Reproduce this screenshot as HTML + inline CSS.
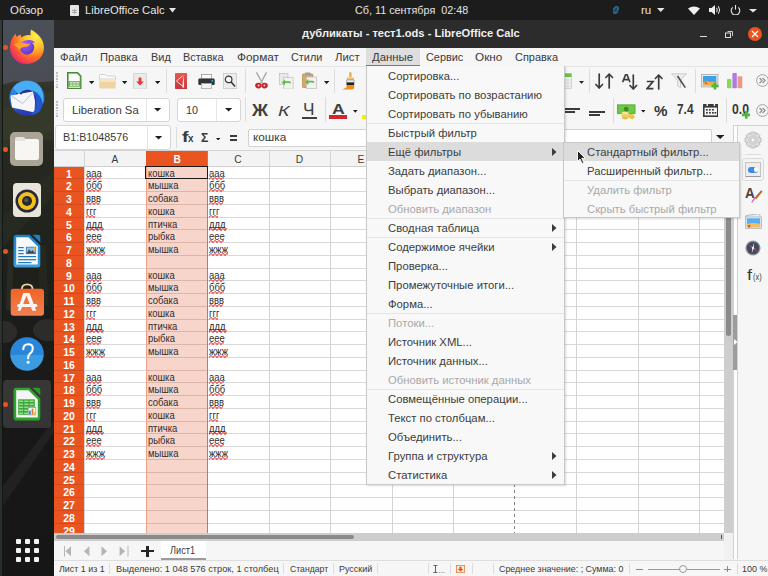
<!DOCTYPE html><html><head><meta charset="utf-8"><style>
*{margin:0;padding:0;box-sizing:border-box}
html,body{width:768px;height:576px;overflow:hidden;background:#151515;font-family:"Liberation Sans",sans-serif}
.a{position:absolute}
.t{position:absolute;white-space:nowrap;line-height:1}
</style></head><body>
<div class="a" style="left:0;top:20px;width:54px;height:556px;background:linear-gradient(180deg,#4a4f58 0px,#4a4e56 40px,#4b4d52 64px,#2c2e26 66px,#2a2c23 110px,#24261f 170px,#1f211c 230px,#1c1d1a 300px,#181818 400px,#161616 556px)"></div>
<svg class="a" style="left:0;top:20px" width="54" height="556" viewBox="0 0 54 556"><path d="M0 66 Q12 60 24 62 Q40 63 54 61 V120 H0Z" fill="#32352a" opacity="0.9"/><path d="M0 90 Q20 80 54 70 V110 Q30 120 0 130Z" fill="#3a3d2c" opacity="0.5"/><path d="M0 200 L54 150 V175 L0 230Z" fill="#2c2f24" opacity="0.6"/><path d="M0 470 L54 400 V412 L0 490Z" fill="#262626" opacity="0.7"/><ellipse cx="4" cy="312" rx="13" ry="11" fill="#3a3a3a" opacity="0.55"/><ellipse cx="48" cy="310" rx="15" ry="11" fill="#3a3a3a" opacity="0.55"/><path d="M8 230 L14 230 L12 290 L6 290Z" fill="#2e3126" opacity="0.7"/><path d="M38 225 L46 225 L48 285 L40 285Z" fill="#2a2d22" opacity="0.6"/></svg>
<div class="a" style="left:0;top:20px;width:2px;height:556px;background:#2e3530;opacity:0.8"></div>
<div class="a" style="left:2px;top:20px;width:1px;height:556px;background:#121614"></div>
<svg class="a" style="left:9px;top:28px" width="36" height="37" viewBox="0 0 36 37">
<defs><radialGradient id="ffg" cx="0.75" cy="0.2" r="0.95"><stop offset="0" stop-color="#fff048"/><stop offset="0.35" stop-color="#ffc030"/><stop offset="0.6" stop-color="#ff7a22"/><stop offset="0.85" stop-color="#f53a50"/><stop offset="1" stop-color="#e0208a"/></radialGradient>
<radialGradient id="ffp" cx="0.35" cy="0.25" r="0.9"><stop offset="0" stop-color="#a860f8"/><stop offset="1" stop-color="#5032c8"/></radialGradient></defs>
<path d="M22 1.5 C30 6 35 12 35 20 C35 29 27 36 17.5 36 C8 36 1 28.5 1 19.5 C1 13 4 8.5 6.5 5.5 L7.5 9 C8.5 8 10 7.5 11.5 6.5 L12.5 9.5 C15 7.5 19 6.5 22 7.5 C21 5.5 21.5 3.5 22 1.5Z" fill="url(#ffg)"/>
<circle cx="18" cy="19.5" r="7.2" fill="url(#ffp)"/>
<path d="M5 16.5 C9 14.5 13 14 17 15.5 C19 16.5 20.5 16 21.5 15 C20.5 18 18 19 15 19 C12.5 19 11.5 20 11 22 C9 20 7 18 5 16.5Z" fill="#ffa428"/>
<path d="M18.5 12.2 C22 11.5 25 13 26 15 C24 14.5 22 14.8 20.5 15.5Z" fill="#8a50f0"/>
</svg>
<div class="a" style="left:3px;top:45px;width:4.5px;height:4.5px;border-radius:50%;background:#e95420"></div>
<svg class="a" style="left:8px;top:79px" width="38" height="38" viewBox="0 0 38 38">
<defs><linearGradient id="tbg" x1="0" y1="0" x2="0.3" y2="1"><stop offset="0" stop-color="#3a9ef0"/><stop offset="0.6" stop-color="#1f6ad8"/><stop offset="1" stop-color="#2a3ab0"/></linearGradient></defs>
<circle cx="19" cy="19" r="17.6" fill="url(#tbg)"/>
<circle cx="17" cy="21" r="11" fill="#2b2f9a"/>
<path d="M5 9 C10 2 20 0 28 4 C34 8 37 16 35 25 C33 17 29 12 22 11 C16 10 13 13 11 16 C9 14 7 11 5 9Z" fill="#48aef4"/>
<path d="M2.5 16.5 L25 12.5 L27 22 L26.5 33.5 L4 28.5 L3 22Z" fill="#f6f6f8"/>
<path d="M3.5 17 L14.5 24.5 L25 13.5" stroke="#b0b0b8" stroke-width="0.8" fill="none"/>
<path d="M25 12 C33 15 36 23 33 30 C31 34 27 36 22 36 C27 32 29 28 29 22 C29 18 27 15 25 13Z" fill="#2456d0"/>
<circle cx="13" cy="14.5" r="0.9" fill="#402020"/>
</svg>
<div class="a" style="left:10px;top:132px;width:33px;height:34px;border-radius:5px;background:#aaa497"></div>
<div class="a" style="left:15px;top:139px;width:24px;height:21px;border-radius:2px;background:#f7f6f3"></div>
<div class="a" style="left:15px;top:137px;width:10px;height:4px;border-radius:2px 2px 0 0;background:#e6e4df"></div>
<div class="a" style="left:3px;top:147px;width:4.5px;height:4.5px;border-radius:50%;background:#e95420"></div>
<div class="a" style="left:13px;top:183px;width:28px;height:34px;border-radius:4px;background:#e9e5da"></div>
<svg class="a" style="left:14px;top:188px" width="26" height="26"><circle cx="13" cy="13" r="11.5" fill="#2a2a36"/><circle cx="13" cy="13" r="9" fill="#f1c21b"/><circle cx="13" cy="13" r="5" fill="#2a2a2a"/><circle cx="12.2" cy="12.2" r="2" fill="#555"/></svg>
<svg class="a" style="left:13px;top:234px" width="28" height="34" viewBox="0 0 28 34">
<defs><linearGradient id="wrg" x1="0" y1="0" x2="0" y2="1"><stop offset="0" stop-color="#1f7ec0"/><stop offset="0.5" stop-color="#2a8ed0"/><stop offset="1" stop-color="#3aa0e0"/></linearGradient></defs>
<path d="M3.5 0.7 H16.5 L27.3 11.5 V30.5 Q27.3 33.6 24.3 33.6 H3.5 Q0.5 33.6 0.5 30.5 V3.7 Q0.5 0.7 3.5 0.7Z" fill="url(#wrg)"/>
<path d="M3.2 3.2 H15.5 L24.8 12.5 V30.6 H3.2Z" fill="#f6f8fa"/>
<path d="M19.5 0.7 H25 Q27.3 0.7 27.3 3 V8.5Z" fill="#1f7ec0"/>
<g fill="#1f78c0"><rect x="5.2" y="13" width="5.5" height="1.2"/><rect x="5.2" y="16" width="5.5" height="1.2"/><rect x="5.2" y="19" width="5.5" height="1.2"/><rect x="5.2" y="22" width="17.9" height="1.2"/><rect x="5.2" y="25.1" width="17.9" height="1.2"/><rect x="5.2" y="28" width="13.2" height="1.2"/></g>
<rect x="12.9" y="12.8" width="10.2" height="7.3" fill="#1f78c0"/><rect x="13.6" y="13.5" width="8.8" height="5.9" fill="#8ec8f0"/><path d="M13.6 19.4 L16 15.2 L18 17.6 L19.6 16 L22.4 19.4Z" fill="#4a4a4a"/><circle cx="21.6" cy="14.2" r="0.9" fill="#f0c020"/>
</svg>
<div class="a" style="left:3px;top:249px;width:4.5px;height:4.5px;border-radius:50%;background:#e95420"></div>
<svg class="a" style="left:10px;top:283px" width="34" height="34" viewBox="0 0 34 34">
<defs><linearGradient id="swg" x1="0" y1="0" x2="0" y2="1"><stop offset="0" stop-color="#ee6428"/><stop offset="1" stop-color="#f28050"/></linearGradient></defs>
<path d="M11.8 6.5 Q11.8 1.4 17.2 1.4 Q22.6 1.4 22.6 6.5" stroke="#ecd29c" stroke-width="1.9" fill="none"/>
<rect x="0.7" y="5.8" width="33.3" height="27" rx="3" fill="url(#swg)"/>
<path d="M13.2 10 H19.6 L26.2 27.7 H22.4 L16.4 12.8 L10.6 27.7 H7.6Z" fill="#fbf4f0"/>
<rect x="7" y="21" width="20.4" height="3" rx="1.5" fill="#fbf4f0"/>
</svg>
<svg class="a" style="left:10px;top:336.5px" width="34" height="34" viewBox="0 0 34 34">
<defs><clipPath id="hc"><circle cx="17" cy="17" r="16.8"/></clipPath></defs>
<g clip-path="url(#hc)"><rect x="0" y="0" width="34" height="18" fill="#2a86d8"/><rect x="0" y="18" width="34" height="16" fill="#3d9be2"/></g>
<path d="M13.3 12.3 Q13.3 7.3 18.2 7.3 Q22.8 7.3 22.8 11.6 Q22.8 14.4 20.2 16.3 Q18.1 17.8 18.1 21.2" stroke="#fff" stroke-width="2.1" fill="none" stroke-linecap="round"/>
<circle cx="18.1" cy="25.2" r="1.5" fill="#fff"/>
</svg>
<div class="a" style="left:3px;top:380px;width:48px;height:48px;border-radius:4px;background:rgba(255,255,255,0.13)"></div>
<svg class="a" style="left:13px;top:387px" width="28" height="34" viewBox="0 0 28 34">
<path d="M3.5 0.7 H16.5 L27.3 11.5 V30.5 Q27.3 33.6 24.3 33.6 H3.5 Q0.5 33.6 0.5 30.5 V3.7 Q0.5 0.7 3.5 0.7Z" fill="#2ea42a"/>
<path d="M3.2 3.2 H15.5 L24.8 12.5 V30.6 H3.2Z" fill="#f4f6f4"/>
<path d="M19.5 0.7 H25 Q27.3 0.7 27.3 3 V8.5Z" fill="#2a9a26"/>
<rect x="5.2" y="12.3" width="16.6" height="15.5" fill="#3aaa3a"/>
<g fill="#a8e0a0"><rect x="6" y="13.6" width="4" height="1.3"/><rect x="11.3" y="13.6" width="4" height="1.3"/><rect x="16.6" y="13.6" width="4" height="1.3"/>
<rect x="6" y="16.6" width="4" height="1.3"/><rect x="11.3" y="16.6" width="4" height="1.3"/><rect x="16.6" y="16.6" width="4" height="1.3"/>
<rect x="6" y="19.6" width="4" height="1.3"/><rect x="11.3" y="19.6" width="4" height="1.3"/><rect x="16.6" y="19.6" width="4" height="1.3"/>
<rect x="6" y="22.6" width="4" height="1.3"/><rect x="11.3" y="22.6" width="4" height="1.3"/>
<rect x="6" y="25.6" width="4" height="1.3"/><rect x="11.3" y="25.6" width="4" height="1.3"/></g>
<rect x="15.2" y="20.5" width="7.6" height="7.4" fill="#fafafa" stroke="#8a8a8a" stroke-width="0.6"/><rect x="16" y="23.6" width="1.8" height="4" fill="#2a8ee0"/><rect x="18.6" y="21.6" width="1.8" height="6" fill="#e87830"/><rect x="21" y="25.2" width="1.6" height="2.4" fill="#f0c020"/>
</svg>
<div class="a" style="left:3px;top:402px;width:4.5px;height:4.5px;border-radius:50%;background:#e95420"></div>
<div class="a" style="left:16px;top:539px;width:4.5px;height:4.5px;border-radius:1px;background:#f2f2f2"></div>
<div class="a" style="left:25px;top:539px;width:4.5px;height:4.5px;border-radius:1px;background:#f2f2f2"></div>
<div class="a" style="left:34px;top:539px;width:4.5px;height:4.5px;border-radius:1px;background:#f2f2f2"></div>
<div class="a" style="left:16px;top:548px;width:4.5px;height:4.5px;border-radius:1px;background:#f2f2f2"></div>
<div class="a" style="left:25px;top:548px;width:4.5px;height:4.5px;border-radius:1px;background:#f2f2f2"></div>
<div class="a" style="left:34px;top:548px;width:4.5px;height:4.5px;border-radius:1px;background:#f2f2f2"></div>
<div class="a" style="left:16px;top:557px;width:4.5px;height:4.5px;border-radius:1px;background:#f2f2f2"></div>
<div class="a" style="left:25px;top:557px;width:4.5px;height:4.5px;border-radius:1px;background:#f2f2f2"></div>
<div class="a" style="left:34px;top:557px;width:4.5px;height:4.5px;border-radius:1px;background:#f2f2f2"></div>
<div class="a" style="left:0;top:0;width:768px;height:20px;background:#1c1c1c"></div>
<div class="t" style="left:9.5px;top:4.67px;font-size:11.5px;font-weight:normal;font-style:normal;color:#e4e4e4;transform-origin:0 0;transform:scaleX(0.9934);">Обзор</div>
<svg class="a" style="left:69.5px;top:4.5px" width="9" height="11" viewBox="0 0 9 11"><rect x="0" y="0" width="9" height="11" rx="1" fill="#e6e6e6"/><g fill="#9a9a9a"><rect x="2" y="5" width="5" height="0.8"/><rect x="2" y="7" width="5" height="0.8"/><rect x="4.3" y="4" width="0.8" height="5"/></g></svg>
<div class="t" style="left:85px;top:4.67px;font-size:11.5px;font-weight:normal;font-style:normal;color:#e4e4e4;transform-origin:0 0;transform:scaleX(0.9742);">LibreOffice Calc</div>
<svg class="a" style="left:169px;top:8px" width="7" height="5"><path d="M0 0h7l-3.5 4.5z" fill="#e6e6e6"/></svg>
<div class="t" style="left:354.7px;top:4.67px;font-size:11.5px;font-weight:normal;font-style:normal;color:#e4e4e4;transform-origin:0 0;transform:scaleX(0.9390);">Сб, 11 сентября&nbsp; 02:48</div>
<svg class="a" style="left:611px;top:5px" width="10" height="10" viewBox="0 0 10 10"><path d="M6 0.8 Q9 2 8 4.5 Q6.5 5 7.5 7 Q6 9.5 3 9 Q1 7.5 2.5 5.5 Q1 3.5 3 2.5 Q4 1 6 0.8Z" fill="#2a84b8" opacity="0.75"/><path d="M3.5 3.5 L6.5 6.5 M6 2.5 L3.5 7" stroke="#1c1c1c" stroke-width="0.7"/></svg>
<div class="t" style="left:640.5px;top:4.67px;font-size:11.5px;font-weight:normal;font-style:normal;color:#e4e4e4;transform-origin:0 0;transform:scaleX(1.0064);">ru</div>
<svg class="a" style="left:656.5px;top:8px" width="8" height="5"><path d="M0 0h7.5l-3.75 4z" fill="#e6e6e6"/></svg>
<svg class="a" style="left:688px;top:5.5px" width="12" height="9" viewBox="0 0 12 9"><path d="M0 2.6 Q6 -1.6 12 2.6 L6 9 Z" fill="#f0f0f0"/></svg>
<svg class="a" style="left:709px;top:5px" width="12" height="10" viewBox="0 0 12 10"><path d="M0 3h2.5l3.5-3v10l-3.5-3H0z" fill="#f0f0f0"/><path d="M7.6 2.8q1.3 2.2 0 4.4" stroke="#f0f0f0" fill="none" stroke-width="1"/><path d="M9.4 1.2q2.4 3.8 0 7.6" stroke="#f0f0f0" fill="none" stroke-width="1"/></svg>
<svg class="a" style="left:729.5px;top:5px" width="11" height="10" viewBox="0 0 11 10"><path d="M2.7 2.3 A4.3 4.3 0 1 0 8.3 2.3" stroke="#e8e8e8" fill="none" stroke-width="1.1"/><path d="M5.5 0v4.6" stroke="#e8e8e8" stroke-width="1.1"/></svg>
<svg class="a" style="left:749px;top:8.5px" width="8" height="4"><path d="M0 0h8l-4 3.5z" fill="#e6e6e6"/></svg>
<div class="a" style="left:54px;top:20px;width:714px;height:28px;background:#2d2c2c"></div>
<div class="t" style="left:302px;top:28.12px;font-size:11.2px;font-weight:bold;font-style:normal;color:#f0f0f0;transform-origin:0 0;transform:scaleX(0.9936);">дубликаты - тест1.ods - LibreOffice Calc</div>
<div class="a" style="left:700px;top:36.3px;width:7px;height:1.2px;background:#dcdcdc"></div>
<svg class="a" style="left:725px;top:31px" width="8" height="7" viewBox="0 0 8 7"><rect x="0.5" y="2" width="5" height="4.5" fill="none" stroke="#dcdcdc" stroke-width="1"/><path d="M2.5 0.5h5v4.5" fill="none" stroke="#dcdcdc" stroke-width="0.9"/></svg>
<div class="a" style="left:747.5px;top:26.8px;width:14px;height:14px;border-radius:50%;background:#e95420"></div>
<svg class="a" style="left:750.5px;top:29.8px" width="8" height="8" viewBox="0 0 8 8"><path d="M1 1l6 6M7 1l-6 6" stroke="#fff" stroke-width="1.2"/></svg>
<div class="a" style="left:54px;top:48px;width:714px;height:528px;background:#f6f6f6"></div>
<div class="a" style="left:54px;top:66px;width:714px;height:1px;background:#e4e4e4"></div>
<div class="a" style="left:366px;top:48px;width:54px;height:18px;background:#dedede"></div>
<div class="a" style="left:366px;top:64.5px;width:54px;height:2px;background:#e95420"></div>
<div class="t" style="left:60.3px;top:51.73px;font-size:11.3px;font-weight:normal;font-style:normal;color:#3a3a3a;transform-origin:0 0;transform:scaleX(0.9971);">Файл</div>
<div class="t" style="left:100.3px;top:51.73px;font-size:11.3px;font-weight:normal;font-style:normal;color:#3a3a3a;transform-origin:0 0;transform:scaleX(0.9876);">Правка</div>
<div class="t" style="left:150.9px;top:51.73px;font-size:11.3px;font-weight:normal;font-style:normal;color:#3a3a3a;transform-origin:0 0;transform:scaleX(0.9688);">Вид</div>
<div class="t" style="left:183px;top:51.73px;font-size:11.3px;font-weight:normal;font-style:normal;color:#3a3a3a;transform-origin:0 0;transform:scaleX(0.9643);">Вставка</div>
<div class="t" style="left:236.7px;top:51.73px;font-size:11.3px;font-weight:normal;font-style:normal;color:#3a3a3a;transform-origin:0 0;transform:scaleX(1.0463);">Формат</div>
<div class="t" style="left:291.2px;top:51.73px;font-size:11.3px;font-weight:normal;font-style:normal;color:#3a3a3a;transform-origin:0 0;transform:scaleX(0.9617);">Стили</div>
<div class="t" style="left:335px;top:51.73px;font-size:11.3px;font-weight:normal;font-style:normal;color:#3a3a3a;transform-origin:0 0;transform:scaleX(1.0022);">Лист</div>
<div class="t" style="left:372.3px;top:51.73px;font-size:11.3px;font-weight:normal;font-style:normal;color:#3a3a3a;transform-origin:0 0;transform:scaleX(1.0042);">Данные</div>
<div class="t" style="left:426.2px;top:51.73px;font-size:11.3px;font-weight:normal;font-style:normal;color:#3a3a3a;transform-origin:0 0;transform:scaleX(0.9616);">Сервис</div>
<div class="t" style="left:475.4px;top:51.73px;font-size:11.3px;font-weight:normal;font-style:normal;color:#3a3a3a;transform-origin:0 0;transform:scaleX(1.0394);">Окно</div>
<div class="t" style="left:515.3px;top:51.73px;font-size:11.3px;font-weight:normal;font-style:normal;color:#3a3a3a;transform-origin:0 0;transform:scaleX(0.9700);">Справка</div>
<div class="a" style="left:56.3px;top:72.4px;width:2px;height:1.6px;background:#bdbdbd"></div>
<div class="a" style="left:56.3px;top:75.2px;width:2px;height:1.6px;background:#bdbdbd"></div>
<div class="a" style="left:56.3px;top:78.0px;width:2px;height:1.6px;background:#bdbdbd"></div>
<div class="a" style="left:56.3px;top:80.8px;width:2px;height:1.6px;background:#bdbdbd"></div>
<div class="a" style="left:56.3px;top:83.6px;width:2px;height:1.6px;background:#bdbdbd"></div>
<div class="a" style="left:56.3px;top:86.4px;width:2px;height:1.6px;background:#bdbdbd"></div>
<svg class="a" style="left:67px;top:72px" width="14.5" height="17" viewBox="0 0 14.5 17"><path d="M0.6 0.6H10.5L13.9 4V16.4H0.6Z" fill="#7db36a" stroke="#4a8a36" stroke-width="1.2"/><path d="M1.8 1.8H10L12.7 4.5V9H1.8Z" fill="#fbfdfa"/><g fill="#c9e3bd"><rect x="3" y="10" width="2.5" height="1.6"/><rect x="6.2" y="10" width="2.5" height="1.6"/><rect x="9.4" y="10" width="2.5" height="1.6"/><rect x="3" y="12.4" width="2.5" height="1.6"/><rect x="6.2" y="12.4" width="2.5" height="1.6"/><rect x="9.4" y="12.4" width="2.5" height="1.6"/></g><rect x="1.5" y="14.8" width="11.5" height="1" fill="#eef6ea"/></svg>
<svg class="a" style="left:88.9px;top:81px" width="5.2" height="3.2"><path d="M0 0h5.2l-2.6 3.2z" fill="#1e1e1e"/></svg>
<svg class="a" style="left:99px;top:74px" width="17" height="15" viewBox="0 0 17 15"><path d="M0.5 1.5Q0.5 0.5 1.5 0.5H6L7.5 2H15.5Q16.5 2 16.5 3V5H0.5Z" fill="#fbfbfb" stroke="#c8c8c8" stroke-width="0.8"/><path d="M0.3 5H16.7V13.5Q16.7 14.6 15.6 14.6H1.4Q0.3 14.6 0.3 13.5Z" fill="#efd4a3"/><path d="M0.3 5H16.7V8H0.3Z" fill="#f6e3c0"/></svg>
<svg class="a" style="left:121.7px;top:81px" width="5.2" height="3.2"><path d="M0 0h5.2l-2.6 3.2z" fill="#1e1e1e"/></svg>
<svg class="a" style="left:133px;top:72.5px" width="14" height="16.5" viewBox="0 0 14 16.5"><rect x="0.4" y="0.4" width="13.2" height="15.7" rx="1" fill="#ebebeb" stroke="#c8c8c8" stroke-width="0.8"/><path d="M5.6 4.5H8.4V8.5H10.8L7 12.5L3.2 8.5H5.6Z" fill="#e5383b"/></svg>
<svg class="a" style="left:154.9px;top:81px" width="5.2" height="3.2"><path d="M0 0h5.2l-2.6 3.2z" fill="#1e1e1e"/></svg>
<div class="a" style="left:165.5px;top:69px;width:1px;height:24px;background:#dcdcdc"></div>
<svg class="a" style="left:174.7px;top:72.7px" width="12.3" height="16" viewBox="0 0 12.3 16"><defs><linearGradient id="pdfg" x1="0" y1="0" x2="0" y2="1"><stop offset="0" stop-color="#e85a50"/><stop offset="1" stop-color="#c8323a"/></linearGradient></defs><rect x="0" y="0" width="12.3" height="16" rx="0.8" fill="url(#pdfg)"/><path d="M8.5 1.5 L9.2 14.5 L7.3 14.5 Z" fill="#fff" opacity="0.95"/><path d="M7.5 3 L1.5 8 L7.3 13" stroke="#fff" stroke-width="0.9" fill="none" opacity="0.9"/></svg>
<svg class="a" style="left:197.5px;top:73.5px" width="17" height="15" viewBox="0 0 17 15"><rect x="3.5" y="0.5" width="10" height="4.5" fill="#fafafa" stroke="#9a9a9a" stroke-width="0.8"/><rect x="0.3" y="4.5" width="16.4" height="6.5" rx="1.3" fill="#333"/><rect x="3.5" y="9.5" width="10" height="5" fill="#f4f4f4" stroke="#aaa" stroke-width="0.8"/><rect x="13.5" y="6" width="1.6" height="1.6" fill="#2ab0f0"/></svg>
<svg class="a" style="left:223.2px;top:72.7px" width="14" height="16" viewBox="0 0 14 16"><rect x="0.4" y="0.4" width="13.2" height="15.2" fill="#ececec" stroke="#c8c8c8" stroke-width="0.8"/><circle cx="5.6" cy="6.4" r="3.3" fill="#f4f4f4" stroke="#3a3a3a" stroke-width="1.2"/><path d="M8 8.8L12 13.4" stroke="#3a3a3a" stroke-width="1.6"/></svg>
<div class="a" style="left:245.4px;top:69px;width:1px;height:24px;background:#dcdcdc"></div>
<svg class="a" style="left:254.5px;top:72px" width="13" height="17" viewBox="0 0 13 17"><path d="M1.5 0.5 L7.3 11 M11.5 0.5 L5.7 11" stroke="#8c8c8c" stroke-width="1.3"/><path d="M1.8 0.8 L7 10.5 M11.2 0.8 L6 10.5" stroke="#d8d8d8" stroke-width="0.5"/><ellipse cx="3.4" cy="13.6" rx="3.2" ry="2.8" fill="#c8242a"/><ellipse cx="9.6" cy="13.6" rx="3.2" ry="2.8" fill="#c8242a"/><circle cx="3.6" cy="13.6" r="1" fill="#f8d0d0"/><circle cx="9.4" cy="13.6" r="1" fill="#f8d0d0"/></svg>
<svg class="a" style="left:279px;top:72.5px" width="14.5" height="16.5" viewBox="0 0 14.5 16.5"><rect x="0.4" y="0.4" width="8.5" height="11" fill="#e9e9e9" stroke="#c4c4c4" stroke-width="0.8"/><rect x="4.5" y="4.5" width="9.6" height="11.6" fill="#f2f2f2" stroke="#c4c4c4" stroke-width="0.8"/><path d="M2.8 9.5 L6 6.5 V8.3 H10.5 Q12 8.3 12 10.5 Q11 9.9 10 9.9 H6 V12.5 Z" fill="#62b84a"/></svg>
<svg class="a" style="left:301.6px;top:72.2px" width="15" height="17" viewBox="0 0 15 17"><rect x="0.4" y="2" width="10.5" height="13.5" rx="1" fill="#d9a865" stroke="#b88a4a" stroke-width="0.8"/><rect x="3" y="0.4" width="5.5" height="3.2" rx="0.8" fill="#a0a0a0"/><rect x="4.5" y="5" width="10" height="11.6" fill="#f2f2f2" stroke="#c4c4c4" stroke-width="0.8"/><path d="M3.2 10 L6.4 7 V8.8 H10.8 Q12.3 8.8 12.3 11 Q11.3 10.4 10.3 10.4 H6.4 V13 Z" fill="#62b84a"/></svg>
<svg class="a" style="left:323.5px;top:81px" width="5.2" height="3.2"><path d="M0 0h5.2l-2.6 3.2z" fill="#1e1e1e"/></svg>
<div class="a" style="left:334.1px;top:69px;width:1px;height:24px;background:#dcdcdc"></div>
<svg class="a" style="left:341.5px;top:72px" width="15" height="18" viewBox="0 0 15 18"><rect x="7.2" y="0" width="2.4" height="5.5" rx="1.2" fill="#e0b060"/><path d="M4.8 5.5H12V8H4.8Z" fill="#f0c070"/><path d="M4.5 8H12.2V10.5H4.5Z" fill="#eee" stroke="#777" stroke-width="0.5"/><path d="M4.5 10.5H12.2V13H4.5Z" fill="#222"/><path d="M4.5 13H12.2V15.5Q12.2 17.5 10 17.5H0.2Q2.5 16.5 4.5 15.5Z" fill="#f08c1a"/></svg>
<div class="a" style="left:56.3px;top:101.4px;width:2px;height:1.6px;background:#bdbdbd"></div>
<div class="a" style="left:56.3px;top:104.2px;width:2px;height:1.6px;background:#bdbdbd"></div>
<div class="a" style="left:56.3px;top:107.0px;width:2px;height:1.6px;background:#bdbdbd"></div>
<div class="a" style="left:56.3px;top:109.8px;width:2px;height:1.6px;background:#bdbdbd"></div>
<div class="a" style="left:56.3px;top:112.6px;width:2px;height:1.6px;background:#bdbdbd"></div>
<div class="a" style="left:56.3px;top:115.4px;width:2px;height:1.6px;background:#bdbdbd"></div>
<div class="a" style="left:63.4px;top:97.8px;width:107px;height:24.4px;background:#fff;border:1px solid #d6d6d6;border-radius:3px"></div>
<div class="a" style="left:145.7px;top:98.8px;width:1px;height:22.4px;background:#e4e4e4"></div>
<svg class="a" style="left:154.45000000000002px;top:108.4px" width="7.2" height="3.6"><path d="M0 0h7.2l-3.6 3.6z" fill="#1e1e1e"/></svg>
<div class="t" style="left:71.7px;top:104.99px;font-size:11px;font-weight:normal;font-style:normal;color:#3a3a3a;transform-origin:0 0;transform:scaleX(1.0289);">Liberation Sa</div>
<div class="a" style="left:177.3px;top:97.8px;width:63.5px;height:24.4px;background:#fff;border:1px solid #d6d6d6;border-radius:3px"></div>
<div class="a" style="left:215.8px;top:98.8px;width:1px;height:22.4px;background:#e4e4e4"></div>
<svg class="a" style="left:224.70000000000002px;top:108.4px" width="7.2" height="3.6"><path d="M0 0h7.2l-3.6 3.6z" fill="#1e1e1e"/></svg>
<div class="t" style="left:185.7px;top:104.99px;font-size:11px;font-weight:normal;font-style:normal;color:#3a3a3a;transform-origin:0 0;transform:scaleX(0.9796);">10</div>
<div class="a" style="left:244.7px;top:97px;width:1px;height:25px;background:#dcdcdc"></div>
<div class="t" style="left:251.5px;top:102.03px;font-size:16.5px;font-weight:bold;font-style:normal;color:#404040;transform-origin:0 0;transform:scaleX(1.0723);">Ж</div>
<div class="t" style="left:278px;top:102.88px;font-size:15.5px;font-weight:normal;font-style:italic;color:#404040;transform-origin:0 0;transform:scaleX(1.2581);">К</div>
<div class="t" style="left:303.3px;top:100.63px;font-size:16.5px;font-weight:normal;font-style:normal;color:#404040;transform-origin:0 0;transform:scaleX(1.0455);">Ч</div>
<div class="a" style="left:302px;top:117.2px;width:14.6px;height:1.7px;background:#404040"></div>
<div class="a" style="left:324.7px;top:97px;width:1px;height:25px;background:#dcdcdc"></div>
<div class="t" style="left:331.8px;top:101.03px;font-size:15.2px;font-weight:bold;font-style:normal;color:#404040;transform-origin:0 0;transform:scaleX(1.1670);">A</div>
<div class="a" style="left:329px;top:115px;width:18.1px;height:3.9px;background:#d4242c"></div>
<svg class="a" style="left:353.2px;top:110.4px" width="4.6" height="2.8"><path d="M0 0h4.6l-2.3 2.8z" fill="#1e1e1e"/></svg>
<div class="a" style="left:362.4px;top:114.6px;width:4px;height:4.3px;background:#eef000"></div>
<div class="a" style="left:55px;top:125.3px;width:116px;height:24.7px;background:#fff;border:1px solid #d6d6d6;border-radius:3px"></div>
<div class="a" style="left:146.7px;top:126.3px;width:1px;height:22.7px;background:#e4e4e4"></div>
<svg class="a" style="left:155.25px;top:136.05px" width="7.2" height="3.6"><path d="M0 0h7.2l-3.6 3.6z" fill="#1e1e1e"/></svg>
<div class="t" style="left:62.75px;top:132.49px;font-size:11px;font-weight:normal;font-style:normal;color:#3a3a3a;transform-origin:0 0;transform:scaleX(0.9779);">B1:B1048576</div>
<div class="a" style="left:175.5px;top:127px;width:1px;height:21px;background:#dcdcdc"></div>
<div class="t" style="left:181.5px;top:129.73px;font-size:14.5px;font-weight:bold;font-style:normal;color:#3a3a3a;transform-origin:0 0;transform:scaleX(1.3419);">f</div>
<div class="t" style="left:187.5px;top:134.03px;font-size:10px;font-weight:bold;font-style:normal;color:#3a3a3a;transform-origin:0 0;transform:scaleX(0.9888);">x</div>
<div class="t" style="left:200.9px;top:130.57px;font-size:13.5px;font-weight:bold;font-style:normal;color:#3a3a3a;transform-origin:0 0;transform:scaleX(0.9002);">Σ</div>
<svg class="a" style="left:216.2px;top:137.8px" width="4.2" height="2.6"><path d="M0 0h4.2l-2.1 2.6z" fill="#1e1e1e"/></svg>
<div class="a" style="left:229.8px;top:135.3px;width:7.2px;height:1.8px;background:#3a3a3a"></div>
<div class="a" style="left:229.8px;top:139.3px;width:7.2px;height:1.8px;background:#3a3a3a"></div>
<div class="a" style="left:248px;top:129px;width:464px;height:18px;background:#fff;border:1px solid #d2d2d2;border-radius:2px"></div>
<div class="t" style="left:252.7px;top:132.43px;font-size:11.3px;font-weight:normal;font-style:normal;color:#3a3a3a;transform-origin:0 0;transform:scaleX(1.0442);">кошка</div>
<svg class="a" style="left:715.7px;top:135.3px" width="8.3" height="4.1"><path d="M0 0h8.3l-4.15 4.1z" fill="#1e1e1e"/></svg>
<svg class="a" style="left:560px;top:73px" width="12" height="16" viewBox="0 0 12 16"><rect x="0" y="0.5" width="11.5" height="15" fill="#f4f4f4" stroke="#bbb" stroke-width="0.6"/><rect x="0" y="0.5" width="11.5" height="3.5" fill="#6cc04a"/><g stroke="#c8c8c8" stroke-width="0.6"><path d="M0 7h11.5M0 10h11.5M0 13h11.5M4 4v11.5M8 4v11.5"/></g></svg>
<svg class="a" style="left:578.6px;top:81px" width="5" height="2.8"><path d="M0 0h5l-2.5 2.8z" fill="#1e1e1e"/></svg>
<div class="a" style="left:589.4px;top:69px;width:1px;height:24px;background:#dcdcdc"></div>
<svg class="a" style="left:595px;top:73px" width="19" height="16" viewBox="0 0 19 16"><g stroke="#3c3c3c" stroke-width="1.7" fill="none" stroke-linecap="round" stroke-linejoin="round"><path d="M4.2 1v14M0.9 11.5l3.3 3.5 3.3-3.5"/><path d="M14.2 15V1M10.9 4.5l3.3-3.5 3.3 3.5"/></g></svg>
<svg class="a" style="left:621.5px;top:73.5px" width="17" height="16" viewBox="0 0 17 16"><path d="M0.6 8.2L3.6 0.6H5L8 8.2M1.8 5.6H6.8" stroke="#3c3c3c" stroke-width="1.6" fill="none"/><g stroke="#3c3c3c" stroke-width="1.7" fill="none" stroke-linecap="round" stroke-linejoin="round"><path d="M11.3 1v14M8 11.5l3.3 3.5 3.3-3.5"/></g></svg>
<svg class="a" style="left:646px;top:73.5px" width="17.5" height="16" viewBox="0 0 17.5 16"><path d="M0.8 7.5H7L1 14.6H7.4" stroke="#3c3c3c" stroke-width="1.7" fill="none"/><g stroke="#3c3c3c" stroke-width="1.7" fill="none" stroke-linecap="round" stroke-linejoin="round"><path d="M12.7 15V1M9.4 4.5l3.3-3.5 3.3 3.5"/></g></svg>
<svg class="a" style="left:670.8px;top:73.4px" width="16" height="15.5" viewBox="0 0 16 15.5"><path d="M0.5 0.8H15.5L9.5 7.5V14.5L6.5 13V7.5Z" fill="#ececec" stroke="#c4c4c4" stroke-width="0.8"/><path d="M6.5 3L14.3 14.6" stroke="#4a4a4a" stroke-width="1.6"/></svg>
<div class="a" style="left:694.5px;top:69px;width:1px;height:24px;background:#dcdcdc"></div>
<svg class="a" style="left:700.8px;top:74.4px" width="18" height="15.5" viewBox="0 0 18 15.5"><rect x="0.4" y="0.4" width="16.5" height="12.5" fill="#e8e8e8" stroke="#a8a8a8" stroke-width="0.8"/><rect x="2" y="2" width="13.3" height="9.3" fill="#3ea0e6"/><path d="M2 8.5Q6 6.5 9 8Q12 7 15.3 8.3V11.3H2Z" fill="#f0b040"/><circle cx="5" cy="9" r="0.9" fill="#e04020"/><path d="M14 8.5v7M10.5 12h7" stroke="#4cb83a" stroke-width="2.6"/></svg>
<svg class="a" style="left:726.6px;top:73px" width="16" height="15.5" viewBox="0 0 16 15.5"><rect x="0" y="5.9" width="4.4" height="9.4" rx="0.8" fill="#8ad85a"/><rect x="5.4" y="0" width="4.4" height="15.3" rx="0.8" fill="#b07ae0"/><rect x="10.5" y="3.2" width="4.8" height="12.1" rx="0.8" fill="#ec9a88"/></svg>
<svg class="a" style="left:755.5px;top:74.2px" width="13" height="13" viewBox="0 0 13 13"><circle cx="6.5" cy="6.5" r="5.9" fill="#f4f4f4" stroke="#9a9a9a" stroke-width="0.9"/><path d="M3.6 4l2.5 2.5-2.5 2.5M6.6 4l2.5 2.5-2.5 2.5" stroke="#8a8a8a" stroke-width="1.1" fill="none"/></svg>
<div class="a" style="left:565.3px;top:108px;width:14.6px;height:1.6px;background:#3a3a3a"></div>
<div class="a" style="left:565.3px;top:111.2px;width:9.7px;height:1.6px;background:#3a3a3a"></div>
<div class="a" style="left:589.4px;top:111.2px;width:15.2px;height:1.6px;background:#3a3a3a"></div>
<div class="a" style="left:589.4px;top:114.4px;width:10.6px;height:1.6px;background:#3a3a3a"></div>
<div class="a" style="left:612.8px;top:98px;width:1px;height:25px;background:#dcdcdc"></div>
<svg class="a" style="left:616.5px;top:103.5px" width="19" height="16" viewBox="0 0 19 16"><rect x="0" y="0.3" width="18.5" height="9.8" fill="#5cb838"/><rect x="1.2" y="1.5" width="16" height="7.4" fill="#70c84a"/><circle cx="9.2" cy="5.2" r="2.4" fill="#3e8a26"/><ellipse cx="8.2" cy="12" rx="3.5" ry="3.6" fill="#e8c040"/><rect x="4.7" y="9" width="7" height="4" fill="#f0d060"/><ellipse cx="8.2" cy="9" rx="3.5" ry="1.3" fill="#f8e490"/><ellipse cx="14.5" cy="12.5" rx="3.2" ry="2.6" fill="#e8c848" transform="rotate(25 14.5 12.5)"/></svg>
<svg class="a" style="left:640.8px;top:110.3px" width="4.6" height="2.6"><path d="M0 0h4.6l-2.3 2.6z" fill="#1e1e1e"/></svg>
<div class="t" style="left:653.5px;top:103.18px;font-size:15.5px;font-weight:bold;font-style:normal;color:#383838;transform-origin:0 0;transform:scaleX(0.9785);">%</div>
<div class="t" style="left:677.3px;top:102.47px;font-size:14.8px;font-weight:bold;font-style:normal;color:#383838;transform-origin:0 0;transform:scaleX(0.8018);">7.4</div>
<svg class="a" style="left:702.6px;top:103.9px" width="15.6" height="13" viewBox="0 0 15.6 13"><rect x="0" y="0" width="15.6" height="13" rx="0.6" fill="#3a3a3a"/><rect x="1.6" y="3.6" width="12.4" height="7.8" fill="#f4f4f4"/><rect x="3.5" y="0" width="1.4" height="2" fill="#f4f4f4"/><rect x="10.7" y="0" width="1.4" height="2" fill="#f4f4f4"/><g fill="#3a3a3a"><rect x="3" y="5" width="1.8" height="1.6"/><rect x="6" y="5" width="1.8" height="1.6"/><rect x="9" y="5" width="1.8" height="1.6"/><rect x="3" y="8" width="1.8" height="1.6"/><rect x="6" y="8" width="1.8" height="1.6"/><rect x="9" y="8" width="1.8" height="1.6"/><rect x="11.5" y="8" width="1.8" height="1.6"/></g></svg>
<div class="a" style="left:725.6px;top:98px;width:1px;height:25px;background:#dcdcdc"></div>
<div class="t" style="left:731.5px;top:102.47px;font-size:14.8px;font-weight:bold;font-style:normal;color:#383838;transform-origin:0 0;transform:scaleX(0.8261);">0.0</div>
<svg class="a" style="left:741.5px;top:111.2px" width="8.6" height="7.8" viewBox="0 0 8.6 7.8"><path d="M4.3 0v7.8M0 3.9h8.6" stroke="#4cb83a" stroke-width="2.6"/></svg>
<svg class="a" style="left:755.5px;top:103.7px" width="13" height="13" viewBox="0 0 13 13"><circle cx="6.5" cy="6.5" r="5.9" fill="#f4f4f4" stroke="#9a9a9a" stroke-width="0.9"/><path d="M3.6 4l2.5 2.5-2.5 2.5M6.6 4l2.5 2.5-2.5 2.5" stroke="#8a8a8a" stroke-width="1.1" fill="none"/></svg>
<div class="a" style="left:54px;top:150px;width:670px;height:1px;background:#d4d4d4"></div>
<div class="a" style="left:54px;top:151px;width:670px;height:382px;background:#fff;overflow:hidden">
<div class="a" style="left:0;top:0;width:670px;height:15px;background:#f3f3f3"></div>
<div class="a" style="left:0;top:15px;width:30px;height:367px;background:#e95420"></div>
<div class="a" style="left:92px;top:0;width:61px;height:15px;background:#e95420"></div>
<div class="a" style="left:92px;top:15px;width:61px;height:367px;background:#f8d5ca"></div>
<div class="a" style="left:30px;top:15px;width:640px;height:1px;background:#d9d9d9"></div>
<div class="a" style="left:30px;top:27px;width:640px;height:1px;background:#d9d9d9"></div>
<div class="a" style="left:92px;top:27px;width:61px;height:1px;background:#dcb4a8"></div>
<div class="a" style="left:0;top:27px;width:30px;height:1px;background:#d44c1e"></div>
<div class="a" style="left:30px;top:40px;width:640px;height:1px;background:#d9d9d9"></div>
<div class="a" style="left:92px;top:40px;width:61px;height:1px;background:#dcb4a8"></div>
<div class="a" style="left:0;top:40px;width:30px;height:1px;background:#d44c1e"></div>
<div class="a" style="left:30px;top:53px;width:640px;height:1px;background:#d9d9d9"></div>
<div class="a" style="left:92px;top:53px;width:61px;height:1px;background:#dcb4a8"></div>
<div class="a" style="left:0;top:53px;width:30px;height:1px;background:#d44c1e"></div>
<div class="a" style="left:30px;top:66px;width:640px;height:1px;background:#d9d9d9"></div>
<div class="a" style="left:92px;top:66px;width:61px;height:1px;background:#dcb4a8"></div>
<div class="a" style="left:0;top:66px;width:30px;height:1px;background:#d44c1e"></div>
<div class="a" style="left:30px;top:78px;width:640px;height:1px;background:#d9d9d9"></div>
<div class="a" style="left:92px;top:78px;width:61px;height:1px;background:#dcb4a8"></div>
<div class="a" style="left:0;top:78px;width:30px;height:1px;background:#d44c1e"></div>
<div class="a" style="left:30px;top:91px;width:640px;height:1px;background:#d9d9d9"></div>
<div class="a" style="left:92px;top:91px;width:61px;height:1px;background:#dcb4a8"></div>
<div class="a" style="left:0;top:91px;width:30px;height:1px;background:#d44c1e"></div>
<div class="a" style="left:30px;top:104px;width:640px;height:1px;background:#d9d9d9"></div>
<div class="a" style="left:92px;top:104px;width:61px;height:1px;background:#dcb4a8"></div>
<div class="a" style="left:0;top:104px;width:30px;height:1px;background:#d44c1e"></div>
<div class="a" style="left:30px;top:117px;width:640px;height:1px;background:#d9d9d9"></div>
<div class="a" style="left:92px;top:117px;width:61px;height:1px;background:#dcb4a8"></div>
<div class="a" style="left:0;top:117px;width:30px;height:1px;background:#d44c1e"></div>
<div class="a" style="left:30px;top:129px;width:640px;height:1px;background:#d9d9d9"></div>
<div class="a" style="left:92px;top:129px;width:61px;height:1px;background:#dcb4a8"></div>
<div class="a" style="left:0;top:129px;width:30px;height:1px;background:#d44c1e"></div>
<div class="a" style="left:30px;top:142px;width:640px;height:1px;background:#d9d9d9"></div>
<div class="a" style="left:92px;top:142px;width:61px;height:1px;background:#dcb4a8"></div>
<div class="a" style="left:0;top:142px;width:30px;height:1px;background:#d44c1e"></div>
<div class="a" style="left:30px;top:155px;width:640px;height:1px;background:#d9d9d9"></div>
<div class="a" style="left:92px;top:155px;width:61px;height:1px;background:#dcb4a8"></div>
<div class="a" style="left:0;top:155px;width:30px;height:1px;background:#d44c1e"></div>
<div class="a" style="left:30px;top:168px;width:640px;height:1px;background:#d9d9d9"></div>
<div class="a" style="left:92px;top:168px;width:61px;height:1px;background:#dcb4a8"></div>
<div class="a" style="left:0;top:168px;width:30px;height:1px;background:#d44c1e"></div>
<div class="a" style="left:30px;top:180px;width:640px;height:1px;background:#d9d9d9"></div>
<div class="a" style="left:92px;top:180px;width:61px;height:1px;background:#dcb4a8"></div>
<div class="a" style="left:0;top:180px;width:30px;height:1px;background:#d44c1e"></div>
<div class="a" style="left:30px;top:193px;width:640px;height:1px;background:#d9d9d9"></div>
<div class="a" style="left:92px;top:193px;width:61px;height:1px;background:#dcb4a8"></div>
<div class="a" style="left:0;top:193px;width:30px;height:1px;background:#d44c1e"></div>
<div class="a" style="left:30px;top:206px;width:640px;height:1px;background:#d9d9d9"></div>
<div class="a" style="left:92px;top:206px;width:61px;height:1px;background:#dcb4a8"></div>
<div class="a" style="left:0;top:206px;width:30px;height:1px;background:#d44c1e"></div>
<div class="a" style="left:30px;top:219px;width:640px;height:1px;background:#d9d9d9"></div>
<div class="a" style="left:92px;top:219px;width:61px;height:1px;background:#dcb4a8"></div>
<div class="a" style="left:0;top:219px;width:30px;height:1px;background:#d44c1e"></div>
<div class="a" style="left:30px;top:231px;width:640px;height:1px;background:#d9d9d9"></div>
<div class="a" style="left:92px;top:231px;width:61px;height:1px;background:#dcb4a8"></div>
<div class="a" style="left:0;top:231px;width:30px;height:1px;background:#d44c1e"></div>
<div class="a" style="left:30px;top:244px;width:640px;height:1px;background:#d9d9d9"></div>
<div class="a" style="left:92px;top:244px;width:61px;height:1px;background:#dcb4a8"></div>
<div class="a" style="left:0;top:244px;width:30px;height:1px;background:#d44c1e"></div>
<div class="a" style="left:30px;top:257px;width:640px;height:1px;background:#d9d9d9"></div>
<div class="a" style="left:92px;top:257px;width:61px;height:1px;background:#dcb4a8"></div>
<div class="a" style="left:0;top:257px;width:30px;height:1px;background:#d44c1e"></div>
<div class="a" style="left:30px;top:270px;width:640px;height:1px;background:#d9d9d9"></div>
<div class="a" style="left:92px;top:270px;width:61px;height:1px;background:#dcb4a8"></div>
<div class="a" style="left:0;top:270px;width:30px;height:1px;background:#d44c1e"></div>
<div class="a" style="left:30px;top:282px;width:640px;height:1px;background:#d9d9d9"></div>
<div class="a" style="left:92px;top:282px;width:61px;height:1px;background:#dcb4a8"></div>
<div class="a" style="left:0;top:282px;width:30px;height:1px;background:#d44c1e"></div>
<div class="a" style="left:30px;top:295px;width:640px;height:1px;background:#d9d9d9"></div>
<div class="a" style="left:92px;top:295px;width:61px;height:1px;background:#dcb4a8"></div>
<div class="a" style="left:0;top:295px;width:30px;height:1px;background:#d44c1e"></div>
<div class="a" style="left:30px;top:308px;width:640px;height:1px;background:#d9d9d9"></div>
<div class="a" style="left:92px;top:308px;width:61px;height:1px;background:#dcb4a8"></div>
<div class="a" style="left:0;top:308px;width:30px;height:1px;background:#d44c1e"></div>
<div class="a" style="left:30px;top:321px;width:640px;height:1px;background:#d9d9d9"></div>
<div class="a" style="left:92px;top:321px;width:61px;height:1px;background:#dcb4a8"></div>
<div class="a" style="left:0;top:321px;width:30px;height:1px;background:#d44c1e"></div>
<div class="a" style="left:30px;top:333px;width:640px;height:1px;background:#d9d9d9"></div>
<div class="a" style="left:92px;top:333px;width:61px;height:1px;background:#dcb4a8"></div>
<div class="a" style="left:0;top:333px;width:30px;height:1px;background:#d44c1e"></div>
<div class="a" style="left:30px;top:346px;width:640px;height:1px;background:#d9d9d9"></div>
<div class="a" style="left:92px;top:346px;width:61px;height:1px;background:#dcb4a8"></div>
<div class="a" style="left:0;top:346px;width:30px;height:1px;background:#d44c1e"></div>
<div class="a" style="left:30px;top:359px;width:640px;height:1px;background:#d9d9d9"></div>
<div class="a" style="left:92px;top:359px;width:61px;height:1px;background:#dcb4a8"></div>
<div class="a" style="left:0;top:359px;width:30px;height:1px;background:#d44c1e"></div>
<div class="a" style="left:30px;top:372px;width:640px;height:1px;background:#d9d9d9"></div>
<div class="a" style="left:92px;top:372px;width:61px;height:1px;background:#dcb4a8"></div>
<div class="a" style="left:0;top:372px;width:30px;height:1px;background:#d44c1e"></div>
<div class="a" style="left:30px;top:384px;width:640px;height:1px;background:#d9d9d9"></div>
<div class="a" style="left:92px;top:384px;width:61px;height:1px;background:#dcb4a8"></div>
<div class="a" style="left:0;top:384px;width:30px;height:1px;background:#d44c1e"></div>
<div class="a" style="left:30px;top:397px;width:640px;height:1px;background:#d9d9d9"></div>
<div class="a" style="left:92px;top:397px;width:61px;height:1px;background:#dcb4a8"></div>
<div class="a" style="left:0;top:397px;width:30px;height:1px;background:#d44c1e"></div>
<div class="a" style="left:0;top:15px;width:670px;height:1px;background:#cfcfcf"></div>
<div class="a" style="left:30px;top:0;width:1px;height:382px;background:#d4d4d4"></div>
<div class="a" style="left:92px;top:15px;width:1px;height:382px;background:#eea088"></div>
<div class="a" style="left:153px;top:0;width:1px;height:382px;background:#e86a42"></div>
<div class="a" style="left:215px;top:0;width:1px;height:382px;background:#d4d4d4"></div>
<div class="a" style="left:276px;top:0;width:1px;height:382px;background:#d4d4d4"></div>
<div class="a" style="left:338px;top:0;width:1px;height:382px;background:#d4d4d4"></div>
<div class="a" style="left:399px;top:0;width:1px;height:382px;background:#d4d4d4"></div>
<div class="a" style="left:461px;top:0;width:1px;height:15px;background:#cfcfcf"></div>
<div class="a" style="left:460px;top:15px;width:1px;height:382px;background:repeating-linear-gradient(180deg,#858585 0 3px,transparent 3px 6px)"></div>
<div class="a" style="left:522px;top:0;width:1px;height:382px;background:#d4d4d4"></div>
<div class="a" style="left:584px;top:0;width:1px;height:382px;background:#d4d4d4"></div>
<div class="a" style="left:645px;top:0;width:1px;height:382px;background:#d4d4d4"></div>
<div class="t" style="left:41.0px;width:40px;text-align:center;top:4.17px;font-size:10.2px;font-weight:normal;color:#3c3c3c">A</div>
<div class="t" style="left:103.3px;width:40px;text-align:center;top:4.17px;font-size:10.2px;font-weight:bold;color:#fff">B</div>
<div class="t" style="left:164.0px;width:40px;text-align:center;top:4.17px;font-size:10.2px;font-weight:normal;color:#3c3c3c">C</div>
<div class="t" style="left:225.5px;width:40px;text-align:center;top:4.17px;font-size:10.2px;font-weight:normal;color:#3c3c3c">D</div>
<div class="t" style="left:287.0px;width:40px;text-align:center;top:4.17px;font-size:10.2px;font-weight:normal;color:#3c3c3c">E</div>
<div class="t" style="left:348.5px;width:40px;text-align:center;top:4.17px;font-size:10.2px;font-weight:normal;color:#3c3c3c">F</div>
<div class="t" style="left:410.0px;width:40px;text-align:center;top:4.17px;font-size:10.2px;font-weight:normal;color:#3c3c3c">G</div>
<div class="t" style="left:471.5px;width:40px;text-align:center;top:4.17px;font-size:10.2px;font-weight:normal;color:#3c3c3c">H</div>
<div class="t" style="left:533.0px;width:40px;text-align:center;top:4.17px;font-size:10.2px;font-weight:normal;color:#3c3c3c">I</div>
<div class="t" style="left:594.5px;width:40px;text-align:center;top:4.17px;font-size:10.2px;font-weight:normal;color:#3c3c3c">J</div>
<div class="t" style="left:656.0px;width:40px;text-align:center;top:4.17px;font-size:10.2px;font-weight:normal;color:#3c3c3c">K</div>
<div class="t" style="left:0;width:30px;text-align:center;top:17.71px;font-size:10.5px;font-weight:bold;color:#fff">1</div>
<div class="t" style="left:0;width:30px;text-align:center;top:29.71px;font-size:10.5px;font-weight:bold;color:#fff">2</div>
<div class="t" style="left:0;width:30px;text-align:center;top:42.71px;font-size:10.5px;font-weight:bold;color:#fff">3</div>
<div class="t" style="left:0;width:30px;text-align:center;top:55.71px;font-size:10.5px;font-weight:bold;color:#fff">4</div>
<div class="t" style="left:0;width:30px;text-align:center;top:68.71px;font-size:10.5px;font-weight:bold;color:#fff">5</div>
<div class="t" style="left:0;width:30px;text-align:center;top:80.71px;font-size:10.5px;font-weight:bold;color:#fff">6</div>
<div class="t" style="left:0;width:30px;text-align:center;top:93.71px;font-size:10.5px;font-weight:bold;color:#fff">7</div>
<div class="t" style="left:0;width:30px;text-align:center;top:106.71px;font-size:10.5px;font-weight:bold;color:#fff">8</div>
<div class="t" style="left:0;width:30px;text-align:center;top:119.71px;font-size:10.5px;font-weight:bold;color:#fff">9</div>
<div class="t" style="left:0;width:30px;text-align:center;top:131.71px;font-size:10.5px;font-weight:bold;color:#fff">10</div>
<div class="t" style="left:0;width:30px;text-align:center;top:144.71px;font-size:10.5px;font-weight:bold;color:#fff">11</div>
<div class="t" style="left:0;width:30px;text-align:center;top:157.71px;font-size:10.5px;font-weight:bold;color:#fff">12</div>
<div class="t" style="left:0;width:30px;text-align:center;top:170.71px;font-size:10.5px;font-weight:bold;color:#fff">13</div>
<div class="t" style="left:0;width:30px;text-align:center;top:182.71px;font-size:10.5px;font-weight:bold;color:#fff">14</div>
<div class="t" style="left:0;width:30px;text-align:center;top:195.71px;font-size:10.5px;font-weight:bold;color:#fff">15</div>
<div class="t" style="left:0;width:30px;text-align:center;top:208.71px;font-size:10.5px;font-weight:bold;color:#fff">16</div>
<div class="t" style="left:0;width:30px;text-align:center;top:221.71px;font-size:10.5px;font-weight:bold;color:#fff">17</div>
<div class="t" style="left:0;width:30px;text-align:center;top:233.71px;font-size:10.5px;font-weight:bold;color:#fff">18</div>
<div class="t" style="left:0;width:30px;text-align:center;top:246.71px;font-size:10.5px;font-weight:bold;color:#fff">19</div>
<div class="t" style="left:0;width:30px;text-align:center;top:259.71px;font-size:10.5px;font-weight:bold;color:#fff">20</div>
<div class="t" style="left:0;width:30px;text-align:center;top:272.71px;font-size:10.5px;font-weight:bold;color:#fff">21</div>
<div class="t" style="left:0;width:30px;text-align:center;top:284.71px;font-size:10.5px;font-weight:bold;color:#fff">22</div>
<div class="t" style="left:0;width:30px;text-align:center;top:297.71px;font-size:10.5px;font-weight:bold;color:#fff">23</div>
<div class="t" style="left:0;width:30px;text-align:center;top:310.71px;font-size:10.5px;font-weight:bold;color:#fff">24</div>
<div class="t" style="left:0;width:30px;text-align:center;top:323.71px;font-size:10.5px;font-weight:bold;color:#fff">25</div>
<div class="t" style="left:0;width:30px;text-align:center;top:335.71px;font-size:10.5px;font-weight:bold;color:#fff">26</div>
<div class="t" style="left:0;width:30px;text-align:center;top:348.71px;font-size:10.5px;font-weight:bold;color:#fff">27</div>
<div class="t" style="left:0;width:30px;text-align:center;top:361.71px;font-size:10.5px;font-weight:bold;color:#fff">28</div>
<div class="t" style="left:0;width:30px;text-align:center;top:374.71px;font-size:10.5px;font-weight:bold;color:#fff">29</div>
<div class="t" style="left:0;width:30px;text-align:center;top:386.71px;font-size:10.5px;font-weight:bold;color:#fff">30</div>
<div class="t" style="left:31.5px;top:16.81px;font-size:10.5px;font-weight:normal;font-style:normal;color:#2e2e2e;transform-origin:0 0;transform:scaleX(0.9);">ааа</div>
<svg class="a" style="left:31.5px;top:25.9px" width="15.0" height="3.5"><path d="M0 2.8 Q1 0.4 2 0.6 Q3 0.4 4 2.8 Q5 0.4 6 0.6 Q7 0.4 8 2.8 Q9 0.4 10 0.6 Q11 0.4 12 2.8 Q13 0.4 14 0.6 Q15 0.4 16 2.8" stroke="#f03a3a" stroke-width="1" fill="none"/></svg>
<div class="t" style="left:93.5px;top:16.81px;font-size:10.5px;font-weight:normal;font-style:normal;color:#2e2e2e;transform-origin:0 0;transform:scaleX(0.9);">кошка</div>
<div class="t" style="left:154.5px;top:16.81px;font-size:10.5px;font-weight:normal;font-style:normal;color:#2e2e2e;transform-origin:0 0;transform:scaleX(0.9);">ааа</div>
<svg class="a" style="left:154.5px;top:25.9px" width="15.0" height="3.5"><path d="M0 2.8 Q1 0.4 2 0.6 Q3 0.4 4 2.8 Q5 0.4 6 0.6 Q7 0.4 8 2.8 Q9 0.4 10 0.6 Q11 0.4 12 2.8 Q13 0.4 14 0.6 Q15 0.4 16 2.8" stroke="#f03a3a" stroke-width="1" fill="none"/></svg>
<div class="t" style="left:31.5px;top:28.81px;font-size:10.5px;font-weight:normal;font-style:normal;color:#2e2e2e;transform-origin:0 0;transform:scaleX(0.9);">ббб</div>
<svg class="a" style="left:31.5px;top:37.9px" width="15.5" height="3.5"><path d="M0 2.8 Q1 0.4 2 0.6 Q3 0.4 4 2.8 Q5 0.4 6 0.6 Q7 0.4 8 2.8 Q9 0.4 10 0.6 Q11 0.4 12 2.8 Q13 0.4 14 0.6 Q15 0.4 16 2.8" stroke="#f03a3a" stroke-width="1" fill="none"/></svg>
<div class="t" style="left:93.5px;top:28.81px;font-size:10.5px;font-weight:normal;font-style:normal;color:#2e2e2e;transform-origin:0 0;transform:scaleX(0.9);">мышка</div>
<div class="t" style="left:154.5px;top:28.81px;font-size:10.5px;font-weight:normal;font-style:normal;color:#2e2e2e;transform-origin:0 0;transform:scaleX(0.9);">ббб</div>
<svg class="a" style="left:154.5px;top:37.9px" width="15.5" height="3.5"><path d="M0 2.8 Q1 0.4 2 0.6 Q3 0.4 4 2.8 Q5 0.4 6 0.6 Q7 0.4 8 2.8 Q9 0.4 10 0.6 Q11 0.4 12 2.8 Q13 0.4 14 0.6 Q15 0.4 16 2.8" stroke="#f03a3a" stroke-width="1" fill="none"/></svg>
<div class="t" style="left:31.5px;top:41.81px;font-size:10.5px;font-weight:normal;font-style:normal;color:#2e2e2e;transform-origin:0 0;transform:scaleX(0.9);">ввв</div>
<svg class="a" style="left:31.5px;top:50.9px" width="14.5" height="3.5"><path d="M0 2.8 Q1 0.4 2 0.6 Q3 0.4 4 2.8 Q5 0.4 6 0.6 Q7 0.4 8 2.8 Q9 0.4 10 0.6 Q11 0.4 12 2.8 Q13 0.4 14 0.6 Q15 0.4 16 2.8" stroke="#f03a3a" stroke-width="1" fill="none"/></svg>
<div class="t" style="left:93.5px;top:41.81px;font-size:10.5px;font-weight:normal;font-style:normal;color:#2e2e2e;transform-origin:0 0;transform:scaleX(0.9);">собака</div>
<div class="t" style="left:154.5px;top:41.81px;font-size:10.5px;font-weight:normal;font-style:normal;color:#2e2e2e;transform-origin:0 0;transform:scaleX(0.9);">ввв</div>
<svg class="a" style="left:154.5px;top:50.9px" width="14.5" height="3.5"><path d="M0 2.8 Q1 0.4 2 0.6 Q3 0.4 4 2.8 Q5 0.4 6 0.6 Q7 0.4 8 2.8 Q9 0.4 10 0.6 Q11 0.4 12 2.8 Q13 0.4 14 0.6 Q15 0.4 16 2.8" stroke="#f03a3a" stroke-width="1" fill="none"/></svg>
<div class="t" style="left:31.5px;top:54.81px;font-size:10.5px;font-weight:normal;font-style:normal;color:#2e2e2e;transform-origin:0 0;transform:scaleX(0.9);">ггг</div>
<svg class="a" style="left:31.5px;top:63.9px" width="9.8" height="3.5"><path d="M0 2.8 Q1 0.4 2 0.6 Q3 0.4 4 2.8 Q5 0.4 6 0.6 Q7 0.4 8 2.8 Q9 0.4 10 0.6 Q11 0.4 12 2.8" stroke="#f03a3a" stroke-width="1" fill="none"/></svg>
<div class="t" style="left:93.5px;top:54.81px;font-size:10.5px;font-weight:normal;font-style:normal;color:#2e2e2e;transform-origin:0 0;transform:scaleX(0.9);">кошка</div>
<div class="t" style="left:154.5px;top:54.81px;font-size:10.5px;font-weight:normal;font-style:normal;color:#2e2e2e;transform-origin:0 0;transform:scaleX(0.9);">ггг</div>
<svg class="a" style="left:154.5px;top:63.9px" width="9.8" height="3.5"><path d="M0 2.8 Q1 0.4 2 0.6 Q3 0.4 4 2.8 Q5 0.4 6 0.6 Q7 0.4 8 2.8 Q9 0.4 10 0.6 Q11 0.4 12 2.8" stroke="#f03a3a" stroke-width="1" fill="none"/></svg>
<div class="t" style="left:31.5px;top:67.81px;font-size:10.5px;font-weight:normal;font-style:normal;color:#2e2e2e;transform-origin:0 0;transform:scaleX(0.9);">ддд</div>
<svg class="a" style="left:31.5px;top:76.9px" width="18.0" height="3.5"><path d="M0 2.8 Q1 0.4 2 0.6 Q3 0.4 4 2.8 Q5 0.4 6 0.6 Q7 0.4 8 2.8 Q9 0.4 10 0.6 Q11 0.4 12 2.8 Q13 0.4 14 0.6 Q15 0.4 16 2.8 Q17 0.4 18 0.6 Q19 0.4 20 2.8" stroke="#f03a3a" stroke-width="1" fill="none"/></svg>
<div class="t" style="left:93.5px;top:67.81px;font-size:10.5px;font-weight:normal;font-style:normal;color:#2e2e2e;transform-origin:0 0;transform:scaleX(0.9);">птичка</div>
<div class="t" style="left:154.5px;top:67.81px;font-size:10.5px;font-weight:normal;font-style:normal;color:#2e2e2e;transform-origin:0 0;transform:scaleX(0.9);">ддд</div>
<svg class="a" style="left:154.5px;top:76.9px" width="18.0" height="3.5"><path d="M0 2.8 Q1 0.4 2 0.6 Q3 0.4 4 2.8 Q5 0.4 6 0.6 Q7 0.4 8 2.8 Q9 0.4 10 0.6 Q11 0.4 12 2.8 Q13 0.4 14 0.6 Q15 0.4 16 2.8 Q17 0.4 18 0.6 Q19 0.4 20 2.8" stroke="#f03a3a" stroke-width="1" fill="none"/></svg>
<div class="t" style="left:31.5px;top:79.81px;font-size:10.5px;font-weight:normal;font-style:normal;color:#2e2e2e;transform-origin:0 0;transform:scaleX(0.9);">еее</div>
<svg class="a" style="left:31.5px;top:88.9px" width="15.0" height="3.5"><path d="M0 2.8 Q1 0.4 2 0.6 Q3 0.4 4 2.8 Q5 0.4 6 0.6 Q7 0.4 8 2.8 Q9 0.4 10 0.6 Q11 0.4 12 2.8 Q13 0.4 14 0.6 Q15 0.4 16 2.8" stroke="#f03a3a" stroke-width="1" fill="none"/></svg>
<div class="t" style="left:93.5px;top:79.81px;font-size:10.5px;font-weight:normal;font-style:normal;color:#2e2e2e;transform-origin:0 0;transform:scaleX(0.9);">рыбка</div>
<div class="t" style="left:154.5px;top:79.81px;font-size:10.5px;font-weight:normal;font-style:normal;color:#2e2e2e;transform-origin:0 0;transform:scaleX(0.9);">еее</div>
<svg class="a" style="left:154.5px;top:88.9px" width="15.0" height="3.5"><path d="M0 2.8 Q1 0.4 2 0.6 Q3 0.4 4 2.8 Q5 0.4 6 0.6 Q7 0.4 8 2.8 Q9 0.4 10 0.6 Q11 0.4 12 2.8 Q13 0.4 14 0.6 Q15 0.4 16 2.8" stroke="#f03a3a" stroke-width="1" fill="none"/></svg>
<div class="t" style="left:31.5px;top:92.81px;font-size:10.5px;font-weight:normal;font-style:normal;color:#2e2e2e;transform-origin:0 0;transform:scaleX(0.9);">жжж</div>
<svg class="a" style="left:31.5px;top:101.9px" width="19.8" height="3.5"><path d="M0 2.8 Q1 0.4 2 0.6 Q3 0.4 4 2.8 Q5 0.4 6 0.6 Q7 0.4 8 2.8 Q9 0.4 10 0.6 Q11 0.4 12 2.8 Q13 0.4 14 0.6 Q15 0.4 16 2.8 Q17 0.4 18 0.6 Q19 0.4 20 2.8" stroke="#f03a3a" stroke-width="1" fill="none"/></svg>
<div class="t" style="left:93.5px;top:92.81px;font-size:10.5px;font-weight:normal;font-style:normal;color:#2e2e2e;transform-origin:0 0;transform:scaleX(0.9);">мышка</div>
<div class="t" style="left:154.5px;top:92.81px;font-size:10.5px;font-weight:normal;font-style:normal;color:#2e2e2e;transform-origin:0 0;transform:scaleX(0.9);">жжж</div>
<svg class="a" style="left:154.5px;top:101.9px" width="19.8" height="3.5"><path d="M0 2.8 Q1 0.4 2 0.6 Q3 0.4 4 2.8 Q5 0.4 6 0.6 Q7 0.4 8 2.8 Q9 0.4 10 0.6 Q11 0.4 12 2.8 Q13 0.4 14 0.6 Q15 0.4 16 2.8 Q17 0.4 18 0.6 Q19 0.4 20 2.8" stroke="#f03a3a" stroke-width="1" fill="none"/></svg>
<div class="t" style="left:31.5px;top:118.81px;font-size:10.5px;font-weight:normal;font-style:normal;color:#2e2e2e;transform-origin:0 0;transform:scaleX(0.9);">ааа</div>
<svg class="a" style="left:31.5px;top:127.9px" width="15.0" height="3.5"><path d="M0 2.8 Q1 0.4 2 0.6 Q3 0.4 4 2.8 Q5 0.4 6 0.6 Q7 0.4 8 2.8 Q9 0.4 10 0.6 Q11 0.4 12 2.8 Q13 0.4 14 0.6 Q15 0.4 16 2.8" stroke="#f03a3a" stroke-width="1" fill="none"/></svg>
<div class="t" style="left:93.5px;top:118.81px;font-size:10.5px;font-weight:normal;font-style:normal;color:#2e2e2e;transform-origin:0 0;transform:scaleX(0.9);">кошка</div>
<div class="t" style="left:154.5px;top:118.81px;font-size:10.5px;font-weight:normal;font-style:normal;color:#2e2e2e;transform-origin:0 0;transform:scaleX(0.9);">ааа</div>
<svg class="a" style="left:154.5px;top:127.9px" width="15.0" height="3.5"><path d="M0 2.8 Q1 0.4 2 0.6 Q3 0.4 4 2.8 Q5 0.4 6 0.6 Q7 0.4 8 2.8 Q9 0.4 10 0.6 Q11 0.4 12 2.8 Q13 0.4 14 0.6 Q15 0.4 16 2.8" stroke="#f03a3a" stroke-width="1" fill="none"/></svg>
<div class="t" style="left:31.5px;top:130.81px;font-size:10.5px;font-weight:normal;font-style:normal;color:#2e2e2e;transform-origin:0 0;transform:scaleX(0.9);">ббб</div>
<svg class="a" style="left:31.5px;top:139.9px" width="15.5" height="3.5"><path d="M0 2.8 Q1 0.4 2 0.6 Q3 0.4 4 2.8 Q5 0.4 6 0.6 Q7 0.4 8 2.8 Q9 0.4 10 0.6 Q11 0.4 12 2.8 Q13 0.4 14 0.6 Q15 0.4 16 2.8" stroke="#f03a3a" stroke-width="1" fill="none"/></svg>
<div class="t" style="left:93.5px;top:130.81px;font-size:10.5px;font-weight:normal;font-style:normal;color:#2e2e2e;transform-origin:0 0;transform:scaleX(0.9);">мышка</div>
<div class="t" style="left:154.5px;top:130.81px;font-size:10.5px;font-weight:normal;font-style:normal;color:#2e2e2e;transform-origin:0 0;transform:scaleX(0.9);">ббб</div>
<svg class="a" style="left:154.5px;top:139.9px" width="15.5" height="3.5"><path d="M0 2.8 Q1 0.4 2 0.6 Q3 0.4 4 2.8 Q5 0.4 6 0.6 Q7 0.4 8 2.8 Q9 0.4 10 0.6 Q11 0.4 12 2.8 Q13 0.4 14 0.6 Q15 0.4 16 2.8" stroke="#f03a3a" stroke-width="1" fill="none"/></svg>
<div class="t" style="left:31.5px;top:143.81px;font-size:10.5px;font-weight:normal;font-style:normal;color:#2e2e2e;transform-origin:0 0;transform:scaleX(0.9);">ввв</div>
<svg class="a" style="left:31.5px;top:152.9px" width="14.5" height="3.5"><path d="M0 2.8 Q1 0.4 2 0.6 Q3 0.4 4 2.8 Q5 0.4 6 0.6 Q7 0.4 8 2.8 Q9 0.4 10 0.6 Q11 0.4 12 2.8 Q13 0.4 14 0.6 Q15 0.4 16 2.8" stroke="#f03a3a" stroke-width="1" fill="none"/></svg>
<div class="t" style="left:93.5px;top:143.81px;font-size:10.5px;font-weight:normal;font-style:normal;color:#2e2e2e;transform-origin:0 0;transform:scaleX(0.9);">собака</div>
<div class="t" style="left:154.5px;top:143.81px;font-size:10.5px;font-weight:normal;font-style:normal;color:#2e2e2e;transform-origin:0 0;transform:scaleX(0.9);">ввв</div>
<svg class="a" style="left:154.5px;top:152.9px" width="14.5" height="3.5"><path d="M0 2.8 Q1 0.4 2 0.6 Q3 0.4 4 2.8 Q5 0.4 6 0.6 Q7 0.4 8 2.8 Q9 0.4 10 0.6 Q11 0.4 12 2.8 Q13 0.4 14 0.6 Q15 0.4 16 2.8" stroke="#f03a3a" stroke-width="1" fill="none"/></svg>
<div class="t" style="left:31.5px;top:156.81px;font-size:10.5px;font-weight:normal;font-style:normal;color:#2e2e2e;transform-origin:0 0;transform:scaleX(0.9);">ггг</div>
<svg class="a" style="left:31.5px;top:165.9px" width="9.8" height="3.5"><path d="M0 2.8 Q1 0.4 2 0.6 Q3 0.4 4 2.8 Q5 0.4 6 0.6 Q7 0.4 8 2.8 Q9 0.4 10 0.6 Q11 0.4 12 2.8" stroke="#f03a3a" stroke-width="1" fill="none"/></svg>
<div class="t" style="left:93.5px;top:156.81px;font-size:10.5px;font-weight:normal;font-style:normal;color:#2e2e2e;transform-origin:0 0;transform:scaleX(0.9);">кошка</div>
<div class="t" style="left:154.5px;top:156.81px;font-size:10.5px;font-weight:normal;font-style:normal;color:#2e2e2e;transform-origin:0 0;transform:scaleX(0.9);">ггг</div>
<svg class="a" style="left:154.5px;top:165.9px" width="9.8" height="3.5"><path d="M0 2.8 Q1 0.4 2 0.6 Q3 0.4 4 2.8 Q5 0.4 6 0.6 Q7 0.4 8 2.8 Q9 0.4 10 0.6 Q11 0.4 12 2.8" stroke="#f03a3a" stroke-width="1" fill="none"/></svg>
<div class="t" style="left:31.5px;top:169.81px;font-size:10.5px;font-weight:normal;font-style:normal;color:#2e2e2e;transform-origin:0 0;transform:scaleX(0.9);">ддд</div>
<svg class="a" style="left:31.5px;top:178.9px" width="18.0" height="3.5"><path d="M0 2.8 Q1 0.4 2 0.6 Q3 0.4 4 2.8 Q5 0.4 6 0.6 Q7 0.4 8 2.8 Q9 0.4 10 0.6 Q11 0.4 12 2.8 Q13 0.4 14 0.6 Q15 0.4 16 2.8 Q17 0.4 18 0.6 Q19 0.4 20 2.8" stroke="#f03a3a" stroke-width="1" fill="none"/></svg>
<div class="t" style="left:93.5px;top:169.81px;font-size:10.5px;font-weight:normal;font-style:normal;color:#2e2e2e;transform-origin:0 0;transform:scaleX(0.9);">птичка</div>
<div class="t" style="left:154.5px;top:169.81px;font-size:10.5px;font-weight:normal;font-style:normal;color:#2e2e2e;transform-origin:0 0;transform:scaleX(0.9);">ддд</div>
<svg class="a" style="left:154.5px;top:178.9px" width="18.0" height="3.5"><path d="M0 2.8 Q1 0.4 2 0.6 Q3 0.4 4 2.8 Q5 0.4 6 0.6 Q7 0.4 8 2.8 Q9 0.4 10 0.6 Q11 0.4 12 2.8 Q13 0.4 14 0.6 Q15 0.4 16 2.8 Q17 0.4 18 0.6 Q19 0.4 20 2.8" stroke="#f03a3a" stroke-width="1" fill="none"/></svg>
<div class="t" style="left:31.5px;top:181.81px;font-size:10.5px;font-weight:normal;font-style:normal;color:#2e2e2e;transform-origin:0 0;transform:scaleX(0.9);">еее</div>
<svg class="a" style="left:31.5px;top:190.9px" width="15.0" height="3.5"><path d="M0 2.8 Q1 0.4 2 0.6 Q3 0.4 4 2.8 Q5 0.4 6 0.6 Q7 0.4 8 2.8 Q9 0.4 10 0.6 Q11 0.4 12 2.8 Q13 0.4 14 0.6 Q15 0.4 16 2.8" stroke="#f03a3a" stroke-width="1" fill="none"/></svg>
<div class="t" style="left:93.5px;top:181.81px;font-size:10.5px;font-weight:normal;font-style:normal;color:#2e2e2e;transform-origin:0 0;transform:scaleX(0.9);">рыбка</div>
<div class="t" style="left:154.5px;top:181.81px;font-size:10.5px;font-weight:normal;font-style:normal;color:#2e2e2e;transform-origin:0 0;transform:scaleX(0.9);">еее</div>
<svg class="a" style="left:154.5px;top:190.9px" width="15.0" height="3.5"><path d="M0 2.8 Q1 0.4 2 0.6 Q3 0.4 4 2.8 Q5 0.4 6 0.6 Q7 0.4 8 2.8 Q9 0.4 10 0.6 Q11 0.4 12 2.8 Q13 0.4 14 0.6 Q15 0.4 16 2.8" stroke="#f03a3a" stroke-width="1" fill="none"/></svg>
<div class="t" style="left:31.5px;top:194.81px;font-size:10.5px;font-weight:normal;font-style:normal;color:#2e2e2e;transform-origin:0 0;transform:scaleX(0.9);">жжж</div>
<svg class="a" style="left:31.5px;top:203.9px" width="19.8" height="3.5"><path d="M0 2.8 Q1 0.4 2 0.6 Q3 0.4 4 2.8 Q5 0.4 6 0.6 Q7 0.4 8 2.8 Q9 0.4 10 0.6 Q11 0.4 12 2.8 Q13 0.4 14 0.6 Q15 0.4 16 2.8 Q17 0.4 18 0.6 Q19 0.4 20 2.8" stroke="#f03a3a" stroke-width="1" fill="none"/></svg>
<div class="t" style="left:93.5px;top:194.81px;font-size:10.5px;font-weight:normal;font-style:normal;color:#2e2e2e;transform-origin:0 0;transform:scaleX(0.9);">мышка</div>
<div class="t" style="left:154.5px;top:194.81px;font-size:10.5px;font-weight:normal;font-style:normal;color:#2e2e2e;transform-origin:0 0;transform:scaleX(0.9);">жжж</div>
<svg class="a" style="left:154.5px;top:203.9px" width="19.8" height="3.5"><path d="M0 2.8 Q1 0.4 2 0.6 Q3 0.4 4 2.8 Q5 0.4 6 0.6 Q7 0.4 8 2.8 Q9 0.4 10 0.6 Q11 0.4 12 2.8 Q13 0.4 14 0.6 Q15 0.4 16 2.8 Q17 0.4 18 0.6 Q19 0.4 20 2.8" stroke="#f03a3a" stroke-width="1" fill="none"/></svg>
<div class="t" style="left:31.5px;top:220.81px;font-size:10.5px;font-weight:normal;font-style:normal;color:#2e2e2e;transform-origin:0 0;transform:scaleX(0.9);">ааа</div>
<svg class="a" style="left:31.5px;top:229.9px" width="15.0" height="3.5"><path d="M0 2.8 Q1 0.4 2 0.6 Q3 0.4 4 2.8 Q5 0.4 6 0.6 Q7 0.4 8 2.8 Q9 0.4 10 0.6 Q11 0.4 12 2.8 Q13 0.4 14 0.6 Q15 0.4 16 2.8" stroke="#f03a3a" stroke-width="1" fill="none"/></svg>
<div class="t" style="left:93.5px;top:220.81px;font-size:10.5px;font-weight:normal;font-style:normal;color:#2e2e2e;transform-origin:0 0;transform:scaleX(0.9);">кошка</div>
<div class="t" style="left:154.5px;top:220.81px;font-size:10.5px;font-weight:normal;font-style:normal;color:#2e2e2e;transform-origin:0 0;transform:scaleX(0.9);">ааа</div>
<svg class="a" style="left:154.5px;top:229.9px" width="15.0" height="3.5"><path d="M0 2.8 Q1 0.4 2 0.6 Q3 0.4 4 2.8 Q5 0.4 6 0.6 Q7 0.4 8 2.8 Q9 0.4 10 0.6 Q11 0.4 12 2.8 Q13 0.4 14 0.6 Q15 0.4 16 2.8" stroke="#f03a3a" stroke-width="1" fill="none"/></svg>
<div class="t" style="left:31.5px;top:232.81px;font-size:10.5px;font-weight:normal;font-style:normal;color:#2e2e2e;transform-origin:0 0;transform:scaleX(0.9);">ббб</div>
<svg class="a" style="left:31.5px;top:241.9px" width="15.5" height="3.5"><path d="M0 2.8 Q1 0.4 2 0.6 Q3 0.4 4 2.8 Q5 0.4 6 0.6 Q7 0.4 8 2.8 Q9 0.4 10 0.6 Q11 0.4 12 2.8 Q13 0.4 14 0.6 Q15 0.4 16 2.8" stroke="#f03a3a" stroke-width="1" fill="none"/></svg>
<div class="t" style="left:93.5px;top:232.81px;font-size:10.5px;font-weight:normal;font-style:normal;color:#2e2e2e;transform-origin:0 0;transform:scaleX(0.9);">мышка</div>
<div class="t" style="left:154.5px;top:232.81px;font-size:10.5px;font-weight:normal;font-style:normal;color:#2e2e2e;transform-origin:0 0;transform:scaleX(0.9);">ббб</div>
<svg class="a" style="left:154.5px;top:241.9px" width="15.5" height="3.5"><path d="M0 2.8 Q1 0.4 2 0.6 Q3 0.4 4 2.8 Q5 0.4 6 0.6 Q7 0.4 8 2.8 Q9 0.4 10 0.6 Q11 0.4 12 2.8 Q13 0.4 14 0.6 Q15 0.4 16 2.8" stroke="#f03a3a" stroke-width="1" fill="none"/></svg>
<div class="t" style="left:31.5px;top:245.81px;font-size:10.5px;font-weight:normal;font-style:normal;color:#2e2e2e;transform-origin:0 0;transform:scaleX(0.9);">ввв</div>
<svg class="a" style="left:31.5px;top:254.9px" width="14.5" height="3.5"><path d="M0 2.8 Q1 0.4 2 0.6 Q3 0.4 4 2.8 Q5 0.4 6 0.6 Q7 0.4 8 2.8 Q9 0.4 10 0.6 Q11 0.4 12 2.8 Q13 0.4 14 0.6 Q15 0.4 16 2.8" stroke="#f03a3a" stroke-width="1" fill="none"/></svg>
<div class="t" style="left:93.5px;top:245.81px;font-size:10.5px;font-weight:normal;font-style:normal;color:#2e2e2e;transform-origin:0 0;transform:scaleX(0.9);">собака</div>
<div class="t" style="left:154.5px;top:245.81px;font-size:10.5px;font-weight:normal;font-style:normal;color:#2e2e2e;transform-origin:0 0;transform:scaleX(0.9);">ввв</div>
<svg class="a" style="left:154.5px;top:254.9px" width="14.5" height="3.5"><path d="M0 2.8 Q1 0.4 2 0.6 Q3 0.4 4 2.8 Q5 0.4 6 0.6 Q7 0.4 8 2.8 Q9 0.4 10 0.6 Q11 0.4 12 2.8 Q13 0.4 14 0.6 Q15 0.4 16 2.8" stroke="#f03a3a" stroke-width="1" fill="none"/></svg>
<div class="t" style="left:31.5px;top:258.81px;font-size:10.5px;font-weight:normal;font-style:normal;color:#2e2e2e;transform-origin:0 0;transform:scaleX(0.9);">ггг</div>
<svg class="a" style="left:31.5px;top:267.9px" width="9.8" height="3.5"><path d="M0 2.8 Q1 0.4 2 0.6 Q3 0.4 4 2.8 Q5 0.4 6 0.6 Q7 0.4 8 2.8 Q9 0.4 10 0.6 Q11 0.4 12 2.8" stroke="#f03a3a" stroke-width="1" fill="none"/></svg>
<div class="t" style="left:93.5px;top:258.81px;font-size:10.5px;font-weight:normal;font-style:normal;color:#2e2e2e;transform-origin:0 0;transform:scaleX(0.9);">кошка</div>
<div class="t" style="left:154.5px;top:258.81px;font-size:10.5px;font-weight:normal;font-style:normal;color:#2e2e2e;transform-origin:0 0;transform:scaleX(0.9);">ггг</div>
<svg class="a" style="left:154.5px;top:267.9px" width="9.8" height="3.5"><path d="M0 2.8 Q1 0.4 2 0.6 Q3 0.4 4 2.8 Q5 0.4 6 0.6 Q7 0.4 8 2.8 Q9 0.4 10 0.6 Q11 0.4 12 2.8" stroke="#f03a3a" stroke-width="1" fill="none"/></svg>
<div class="t" style="left:31.5px;top:271.81px;font-size:10.5px;font-weight:normal;font-style:normal;color:#2e2e2e;transform-origin:0 0;transform:scaleX(0.9);">ддд</div>
<svg class="a" style="left:31.5px;top:280.9px" width="18.0" height="3.5"><path d="M0 2.8 Q1 0.4 2 0.6 Q3 0.4 4 2.8 Q5 0.4 6 0.6 Q7 0.4 8 2.8 Q9 0.4 10 0.6 Q11 0.4 12 2.8 Q13 0.4 14 0.6 Q15 0.4 16 2.8 Q17 0.4 18 0.6 Q19 0.4 20 2.8" stroke="#f03a3a" stroke-width="1" fill="none"/></svg>
<div class="t" style="left:93.5px;top:271.81px;font-size:10.5px;font-weight:normal;font-style:normal;color:#2e2e2e;transform-origin:0 0;transform:scaleX(0.9);">птичка</div>
<div class="t" style="left:154.5px;top:271.81px;font-size:10.5px;font-weight:normal;font-style:normal;color:#2e2e2e;transform-origin:0 0;transform:scaleX(0.9);">ддд</div>
<svg class="a" style="left:154.5px;top:280.9px" width="18.0" height="3.5"><path d="M0 2.8 Q1 0.4 2 0.6 Q3 0.4 4 2.8 Q5 0.4 6 0.6 Q7 0.4 8 2.8 Q9 0.4 10 0.6 Q11 0.4 12 2.8 Q13 0.4 14 0.6 Q15 0.4 16 2.8 Q17 0.4 18 0.6 Q19 0.4 20 2.8" stroke="#f03a3a" stroke-width="1" fill="none"/></svg>
<div class="t" style="left:31.5px;top:283.81px;font-size:10.5px;font-weight:normal;font-style:normal;color:#2e2e2e;transform-origin:0 0;transform:scaleX(0.9);">еее</div>
<svg class="a" style="left:31.5px;top:292.9px" width="15.0" height="3.5"><path d="M0 2.8 Q1 0.4 2 0.6 Q3 0.4 4 2.8 Q5 0.4 6 0.6 Q7 0.4 8 2.8 Q9 0.4 10 0.6 Q11 0.4 12 2.8 Q13 0.4 14 0.6 Q15 0.4 16 2.8" stroke="#f03a3a" stroke-width="1" fill="none"/></svg>
<div class="t" style="left:93.5px;top:283.81px;font-size:10.5px;font-weight:normal;font-style:normal;color:#2e2e2e;transform-origin:0 0;transform:scaleX(0.9);">рыбка</div>
<div class="t" style="left:154.5px;top:283.81px;font-size:10.5px;font-weight:normal;font-style:normal;color:#2e2e2e;transform-origin:0 0;transform:scaleX(0.9);">еее</div>
<svg class="a" style="left:154.5px;top:292.9px" width="15.0" height="3.5"><path d="M0 2.8 Q1 0.4 2 0.6 Q3 0.4 4 2.8 Q5 0.4 6 0.6 Q7 0.4 8 2.8 Q9 0.4 10 0.6 Q11 0.4 12 2.8 Q13 0.4 14 0.6 Q15 0.4 16 2.8" stroke="#f03a3a" stroke-width="1" fill="none"/></svg>
<div class="t" style="left:31.5px;top:296.81px;font-size:10.5px;font-weight:normal;font-style:normal;color:#2e2e2e;transform-origin:0 0;transform:scaleX(0.9);">жжж</div>
<svg class="a" style="left:31.5px;top:305.9px" width="19.8" height="3.5"><path d="M0 2.8 Q1 0.4 2 0.6 Q3 0.4 4 2.8 Q5 0.4 6 0.6 Q7 0.4 8 2.8 Q9 0.4 10 0.6 Q11 0.4 12 2.8 Q13 0.4 14 0.6 Q15 0.4 16 2.8 Q17 0.4 18 0.6 Q19 0.4 20 2.8" stroke="#f03a3a" stroke-width="1" fill="none"/></svg>
<div class="t" style="left:93.5px;top:296.81px;font-size:10.5px;font-weight:normal;font-style:normal;color:#2e2e2e;transform-origin:0 0;transform:scaleX(0.9);">мышка</div>
<div class="t" style="left:154.5px;top:296.81px;font-size:10.5px;font-weight:normal;font-style:normal;color:#2e2e2e;transform-origin:0 0;transform:scaleX(0.9);">жжж</div>
<svg class="a" style="left:154.5px;top:305.9px" width="19.8" height="3.5"><path d="M0 2.8 Q1 0.4 2 0.6 Q3 0.4 4 2.8 Q5 0.4 6 0.6 Q7 0.4 8 2.8 Q9 0.4 10 0.6 Q11 0.4 12 2.8 Q13 0.4 14 0.6 Q15 0.4 16 2.8 Q17 0.4 18 0.6 Q19 0.4 20 2.8" stroke="#f03a3a" stroke-width="1" fill="none"/></svg>
</div>
<div class="a" style="left:145.4px;top:166px;width:62.6px;height:13px;border:1.7px solid #1a1a1a"></div>
<div class="a" style="left:54px;top:533px;width:670px;height:8px;background:#cdcdcd"></div>
<div class="a" style="left:56px;top:535.3px;width:298px;height:3.6px;border-radius:2px;background:#8a8a8a"></div>
<div class="a" style="left:721px;top:535px;width:1.3px;height:4px;background:#555"></div>
<div class="a" style="left:724px;top:151px;width:9px;height:382px;background:#cdcdcd"></div>
<div class="a" style="left:725.8px;top:151px;width:5px;height:185px;border-radius:0 0 2.5px 2.5px;background:#8a8a8a"></div>
<div class="a" style="left:724px;top:533px;width:9px;height:27px;background:#f1f1f1"></div>
<svg class="a" style="left:62px;top:545.5px" width="68" height="11" viewBox="0 0 68 11"><g fill="#b5b5b5"><rect x="2" y="0" width="1" height="10.5"/><path d="M9 0.3v10l-5.5-5z"/><path d="M27.4 0.3v10l-5.5-5z"/><path d="M39.5 0.3v10l5.5-5z"/><path d="M57.6 0.3v10l5.5-5z"/><rect x="65.5" y="0" width="1" height="10.5"/></g></svg>
<div class="a" style="left:140.5px;top:550.2px;width:13.9px;height:2.2px;background:#262626"></div>
<div class="a" style="left:146.4px;top:545.6px;width:2.2px;height:11.2px;background:#262626"></div>
<div class="a" style="left:161.3px;top:541px;width:44.7px;height:19px;background:#fff"></div>
<div class="a" style="left:161.3px;top:558.2px;width:44.7px;height:1.6px;background:#9c9c9c"></div>
<div class="t" style="left:170.3px;top:545.41px;font-size:10.5px;font-weight:normal;font-style:normal;color:#3a3a3a;transform-origin:0 0;transform:scaleX(0.8724);">Лист1</div>
<div class="a" style="left:54px;top:560px;width:714px;height:1px;background:#dedede"></div>
<div class="t" style="left:58.7px;top:564.07px;font-size:9.6px;font-weight:normal;font-style:normal;color:#3a3a3a;transform-origin:0 0;transform:scaleX(0.9294);">Лист 1 из 1</div>
<div class="t" style="left:116px;top:564.07px;font-size:9.6px;font-weight:normal;font-style:normal;color:#3a3a3a;transform-origin:0 0;transform:scaleX(0.9594);">Выделено: 1 048 576 строк, 1 столбец</div>
<div class="t" style="left:289.6px;top:564.07px;font-size:9.6px;font-weight:normal;font-style:normal;color:#3a3a3a;transform-origin:0 0;transform:scaleX(0.9004);">Стандарт</div>
<div class="t" style="left:339.2px;top:564.07px;font-size:9.6px;font-weight:normal;font-style:normal;color:#3a3a3a;transform-origin:0 0;transform:scaleX(0.9351);">Русский</div>
<div class="t" style="left:499.3px;top:564.07px;font-size:9.6px;font-weight:normal;font-style:normal;color:#3a3a3a;transform-origin:0 0;transform:scaleX(0.9266);">Среднее значение: ; Сумма: 0</div>
<div class="t" style="left:742px;top:564.07px;font-size:9.6px;font-weight:normal;font-style:normal;color:#3a3a3a;transform-origin:0 0;transform:scaleX(0.9374);">100 %</div>
<div class="a" style="left:109.2px;top:563px;width:1px;height:11px;background:#dcdcdc"></div>
<div class="a" style="left:283.3px;top:563px;width:1px;height:11px;background:#dcdcdc"></div>
<div class="a" style="left:333px;top:563px;width:1px;height:11px;background:#dcdcdc"></div>
<div class="a" style="left:377px;top:563px;width:1px;height:11px;background:#dcdcdc"></div>
<div class="a" style="left:428.2px;top:563px;width:1px;height:11px;background:#dcdcdc"></div>
<div class="a" style="left:449.8px;top:563px;width:1px;height:11px;background:#dcdcdc"></div>
<div class="a" style="left:471.5px;top:563px;width:1px;height:11px;background:#dcdcdc"></div>
<div class="a" style="left:493.3px;top:563px;width:1px;height:11px;background:#dcdcdc"></div>
<div class="a" style="left:629px;top:563px;width:1px;height:11px;background:#dcdcdc"></div>
<div class="a" style="left:736.7px;top:563px;width:1px;height:11px;background:#dcdcdc"></div>
<svg class="a" style="left:433px;top:565px" width="12" height="8"><path d="M0.5 0.5h4M2.5 0.5v7M0.5 7.5h4" stroke="#555" stroke-width="0.9" fill="none"/><path d="M6 7.5h1.2M8.2 7.5h1.2M10.4 7.5h1.2" stroke="#888" stroke-width="0.8"/></svg>
<svg class="a" style="left:456.4px;top:564.5px" width="9" height="8"><rect x="0.4" y="0.4" width="8.2" height="7.2" fill="#fbe6d6" stroke="#e08040" stroke-width="0.8"/><path d="M3.4 1.8h2.2v2.2h1.6l-2.7 2.6-2.7-2.6h1.6z" fill="#e8501a"/></svg>
<div class="a" style="left:636.4px;top:569px;width:6.3px;height:1px;background:#8a8a8a"></div>
<div class="a" style="left:648px;top:568.8px;width:72px;height:1.2px;background:#9a9a9a"></div>
<div class="a" style="left:679.3px;top:565.2px;width:8px;height:8px;border-radius:50%;background:#f4f4f4;border:1px solid #9a9a9a"></div>
<div class="a" style="left:724px;top:569px;width:6.7px;height:1px;background:#8a8a8a"></div>
<div class="a" style="left:726.8px;top:565.7px;width:1px;height:6.7px;background:#8a8a8a"></div>
<div class="a" style="left:733px;top:125px;width:35px;height:434px;background:#f6f6f6"></div>
<div class="a" style="left:733px;top:125px;width:35px;height:1px;background:#d2d2d2"></div>
<div class="a" style="left:733px;top:125px;width:1px;height:434px;background:#d2d2d2"></div>
<div class="a" style="left:734px;top:126px;width:3px;height:433px;background:#fdfdfd"></div>
<div class="a" style="left:737px;top:125px;width:1px;height:434px;background:#d2d2d2"></div>
<div class="a" style="left:733px;top:315px;width:4px;height:55px;background:#9c9c9c"></div>
<svg class="a" style="left:733.5px;top:339px" width="4" height="6"><path d="M0 0l3.5 3-3.5 3z" fill="#fff"/></svg>
<svg class="a" style="left:744px;top:131px" width="18" height="18" viewBox="0 0 18 18"><path d="M14.84 6.39 L16.96 7.05 L16.96 10.95 L14.84 11.61 L14.98 11.29 L16.01 13.25 L13.25 16.01 L11.29 14.98 L11.61 14.84 L10.95 16.96 L7.05 16.96 L6.39 14.84 L6.71 14.98 L4.75 16.01 L1.99 13.25 L3.02 11.29 L3.16 11.61 L1.04 10.95 L1.04 7.05 L3.16 6.39 L3.02 6.71 L1.99 4.75 L4.75 1.99 L6.71 3.02 L6.39 3.16 L7.05 1.04 L10.95 1.04 L11.61 3.16 L11.29 3.02 L13.25 1.99 L16.01 4.75 L14.98 6.71 Z" fill="#dcdcdc" stroke="#b4b4b4" stroke-width="0.8" stroke-linejoin="round"/><circle cx="9" cy="9" r="4.2" fill="none" stroke="#c4c4c4" stroke-width="0.8"/><circle cx="9" cy="9" r="2.2" fill="#fafafa" stroke="#b4b4b4" stroke-width="0.8"/></svg>
<div class="a" style="left:745.4px;top:154px;width:15.2px;height:1px;background:#dedede"></div>
<div class="a" style="left:742px;top:157.5px;width:22.4px;height:23.6px;border:1px solid #dadada;border-radius:3px;background:#f4f4f4"></div>
<div class="a" style="left:745.4px;top:162.4px;width:15.2px;height:14.3px;border:1px solid #c4c4c4;border-bottom:1.5px solid #9a9a9a;border-radius:1px;background:#ededed"></div>
<div class="a" style="left:748.1px;top:167px;width:9.8px;height:5.5px;border-radius:3px;background:#3a8ce6"></div>
<div class="a" style="left:753.6px;top:167.3px;width:4.8px;height:4.9px;border-radius:50%;background:#fff"></div>
<div class="t" style="left:744.6px;top:185.83px;font-size:14.5px;font-weight:bold;font-style:normal;color:#454545;transform-origin:0 0;transform:scaleX(0.9347);">A</div>
<svg class="a" style="left:750px;top:190px" width="13" height="14" viewBox="0 0 13 14"><path d="M11.8 0.8 L5.5 8.5" stroke="#b86a2a" stroke-width="2"/><path d="M5.8 8 L2.2 12.8 L1.2 12.2 L4.5 7.4z" fill="#e050b0"/></svg>
<svg class="a" style="left:744.6px;top:214.4px" width="17" height="15" viewBox="0 0 17 15"><rect x="1.5" y="0.6" width="14" height="11" fill="#e8eef4" stroke="#9aa8b8" stroke-width="0.7" transform="rotate(-8 8 6)"/><rect x="0.5" y="3" width="16" height="11.5" fill="#f2f2f2" stroke="#a8a8a8" stroke-width="0.7"/><rect x="1.8" y="4.3" width="13.4" height="9" fill="#58aef0"/><path d="M1.8 10Q8 8.2 15.2 10V13.3H1.8Z" fill="#f2c060"/><path d="M4 10.3l0.6 1.2 1.3 0.1-1 0.8 0.4 1.3-1.2-0.7-1.1 0.7 0.3-1.3-1-0.8 1.3-0.1z" fill="#e03a20"/></svg>
<svg class="a" style="left:745.2px;top:239.7px" width="16" height="16" viewBox="0 0 16 16"><circle cx="8" cy="8" r="7.6" fill="#9a9a9a"/><circle cx="8" cy="8" r="6.3" fill="#3e4a66"/><path d="M3.2 4.5 L8.6 7.4 L12.8 11.5 L7.4 8.6Z" fill="#e85050"/><path d="M9.2 2.6 L8.7 8.2 L6.8 13.4 L7.3 7.8Z" fill="#f0f0f0" opacity="0.9"/><circle cx="8" cy="8" r="1" fill="#fff"/></svg>
<div class="t" style="left:746.8px;top:267.08px;font-size:15.5px;font-weight:normal;font-style:normal;color:#3a3a3a;transform-origin:0 0;transform:scaleX(1.1594);">f</div>
<div class="t" style="left:752.6px;top:273.38px;font-size:9px;font-weight:normal;font-style:normal;color:#3a3a3a;transform-origin:0 0;transform:scaleX(0.8190);">(x)</div>
<div class="a" style="left:366px;top:66px;width:199px;height:419px;background:#f8f8f8;border:1px solid #c8c8c8;border-top:none;box-shadow:1px 1px 2px rgba(0,0,0,0.15)"></div>
<div class="a" style="left:367px;top:142px;width:197px;height:19px;background:#dcdcdc"></div>
<div class="t" style="left:388.2px;top:71.16px;font-size:10.8px;font-weight:normal;font-style:normal;color:#3c3c3c;transform-origin:0 0;transform:scaleX(1.046);">Сортировка...</div>
<div class="t" style="left:388.2px;top:90.16px;font-size:10.8px;font-weight:normal;font-style:normal;color:#3c3c3c;transform-origin:0 0;transform:scaleX(1.046);">Сортировать по возрастанию</div>
<div class="t" style="left:388.2px;top:109.16px;font-size:10.8px;font-weight:normal;font-style:normal;color:#3c3c3c;transform-origin:0 0;transform:scaleX(1.046);">Сортировать по убыванию</div>
<div class="t" style="left:388.2px;top:128.16px;font-size:10.8px;font-weight:normal;font-style:normal;color:#3c3c3c;transform-origin:0 0;transform:scaleX(1.046);">Быстрый фильтр</div>
<div class="t" style="left:388.2px;top:147.16px;font-size:10.8px;font-weight:normal;font-style:normal;color:#3c3c3c;transform-origin:0 0;transform:scaleX(1.046);">Ещё фильтры</div>
<svg class="a" style="left:552px;top:148px" width="5" height="8"><path d="M0 0l4.5 4-4.5 4z" fill="#3c3c3c"/></svg>
<div class="t" style="left:388.2px;top:166.16px;font-size:10.8px;font-weight:normal;font-style:normal;color:#3c3c3c;transform-origin:0 0;transform:scaleX(1.046);">Задать диапазон...</div>
<div class="t" style="left:388.2px;top:185.16px;font-size:10.8px;font-weight:normal;font-style:normal;color:#3c3c3c;transform-origin:0 0;transform:scaleX(1.046);">Выбрать диапазон...</div>
<div class="t" style="left:388.2px;top:204.16px;font-size:10.8px;font-weight:normal;font-style:normal;color:#a8a8a8;transform-origin:0 0;transform:scaleX(1.046);">Обновить диапазон</div>
<div class="t" style="left:388.2px;top:223.16px;font-size:10.8px;font-weight:normal;font-style:normal;color:#3c3c3c;transform-origin:0 0;transform:scaleX(1.046);">Сводная таблица</div>
<svg class="a" style="left:552px;top:224px" width="5" height="8"><path d="M0 0l4.5 4-4.5 4z" fill="#3c3c3c"/></svg>
<div class="t" style="left:388.2px;top:242.16px;font-size:10.8px;font-weight:normal;font-style:normal;color:#3c3c3c;transform-origin:0 0;transform:scaleX(1.046);">Содержимое ячейки</div>
<svg class="a" style="left:552px;top:243px" width="5" height="8"><path d="M0 0l4.5 4-4.5 4z" fill="#3c3c3c"/></svg>
<div class="t" style="left:388.2px;top:261.16px;font-size:10.8px;font-weight:normal;font-style:normal;color:#3c3c3c;transform-origin:0 0;transform:scaleX(1.046);">Проверка...</div>
<div class="t" style="left:388.2px;top:280.16px;font-size:10.8px;font-weight:normal;font-style:normal;color:#3c3c3c;transform-origin:0 0;transform:scaleX(1.046);">Промежуточные итоги...</div>
<div class="t" style="left:388.2px;top:299.16px;font-size:10.8px;font-weight:normal;font-style:normal;color:#3c3c3c;transform-origin:0 0;transform:scaleX(1.046);">Форма...</div>
<div class="t" style="left:388.2px;top:318.16px;font-size:10.8px;font-weight:normal;font-style:normal;color:#a8a8a8;transform-origin:0 0;transform:scaleX(1.046);">Потоки...</div>
<div class="t" style="left:388.2px;top:337.16px;font-size:10.8px;font-weight:normal;font-style:normal;color:#3c3c3c;transform-origin:0 0;transform:scaleX(1.046);">Источник XML...</div>
<div class="t" style="left:388.2px;top:356.16px;font-size:10.8px;font-weight:normal;font-style:normal;color:#3c3c3c;transform-origin:0 0;transform:scaleX(1.046);">Источник данных...</div>
<div class="t" style="left:388.2px;top:375.16px;font-size:10.8px;font-weight:normal;font-style:normal;color:#a8a8a8;transform-origin:0 0;transform:scaleX(1.046);">Обновить источник данных</div>
<div class="t" style="left:388.2px;top:394.16px;font-size:10.8px;font-weight:normal;font-style:normal;color:#3c3c3c;transform-origin:0 0;transform:scaleX(1.046);">Совмещённые операции...</div>
<div class="t" style="left:388.2px;top:413.16px;font-size:10.8px;font-weight:normal;font-style:normal;color:#3c3c3c;transform-origin:0 0;transform:scaleX(1.046);">Текст по столбцам...</div>
<div class="t" style="left:388.2px;top:432.16px;font-size:10.8px;font-weight:normal;font-style:normal;color:#3c3c3c;transform-origin:0 0;transform:scaleX(1.046);">Объединить...</div>
<div class="t" style="left:388.2px;top:451.16px;font-size:10.8px;font-weight:normal;font-style:normal;color:#3c3c3c;transform-origin:0 0;transform:scaleX(1.046);">Группа и структура</div>
<svg class="a" style="left:552px;top:452px" width="5" height="8"><path d="M0 0l4.5 4-4.5 4z" fill="#3c3c3c"/></svg>
<div class="t" style="left:388.2px;top:470.16px;font-size:10.8px;font-weight:normal;font-style:normal;color:#3c3c3c;transform-origin:0 0;transform:scaleX(1.046);">Статистика</div>
<svg class="a" style="left:552px;top:471px" width="5" height="8"><path d="M0 0l4.5 4-4.5 4z" fill="#3c3c3c"/></svg>
<div class="a" style="left:367px;top:123px;width:197px;height:1px;background:#e4e4e4"></div>
<div class="a" style="left:367px;top:218px;width:197px;height:1px;background:#e4e4e4"></div>
<div class="a" style="left:367px;top:237px;width:197px;height:1px;background:#e4e4e4"></div>
<div class="a" style="left:367px;top:313px;width:197px;height:1px;background:#e4e4e4"></div>
<div class="a" style="left:367px;top:389px;width:197px;height:1px;background:#e4e4e4"></div>
<div class="a" style="left:563px;top:142px;width:177px;height:76px;background:#f8f8f8;border:1px solid #c8c8c8;box-shadow:1px 1px 2px rgba(0,0,0,0.15)"></div>
<div class="a" style="left:564px;top:143px;width:175px;height:18px;background:#dcdcdc"></div>
<div class="t" style="left:586.6px;top:147.16px;font-size:10.8px;font-weight:normal;font-style:normal;color:#3c3c3c;transform-origin:0 0;transform:scaleX(1.046);">Стандартный фильтр...</div>
<div class="t" style="left:586.6px;top:166.16px;font-size:10.8px;font-weight:normal;font-style:normal;color:#3c3c3c;transform-origin:0 0;transform:scaleX(1.046);">Расширенный фильтр...</div>
<div class="t" style="left:586.6px;top:185.16px;font-size:10.8px;font-weight:normal;font-style:normal;color:#a8a8a8;transform-origin:0 0;transform:scaleX(1.046);">Удалить фильтр</div>
<div class="t" style="left:586.6px;top:204.16px;font-size:10.8px;font-weight:normal;font-style:normal;color:#a8a8a8;transform-origin:0 0;transform:scaleX(1.046);">Скрыть быстрый фильтр</div>
<div class="a" style="left:564px;top:180px;width:175px;height:1px;background:#e4e4e4"></div>
<svg class="a" style="left:577px;top:150px" width="10" height="15" viewBox="0 0 10 15"><path d="M0.5 0.5 L0.5 11.5 L3 9 L5 13.5 L6.8 12.7 L4.8 8.3 L8.3 8.3 Z" fill="#222" stroke="#fff" stroke-width="0.9"/></svg>
</body></html>
